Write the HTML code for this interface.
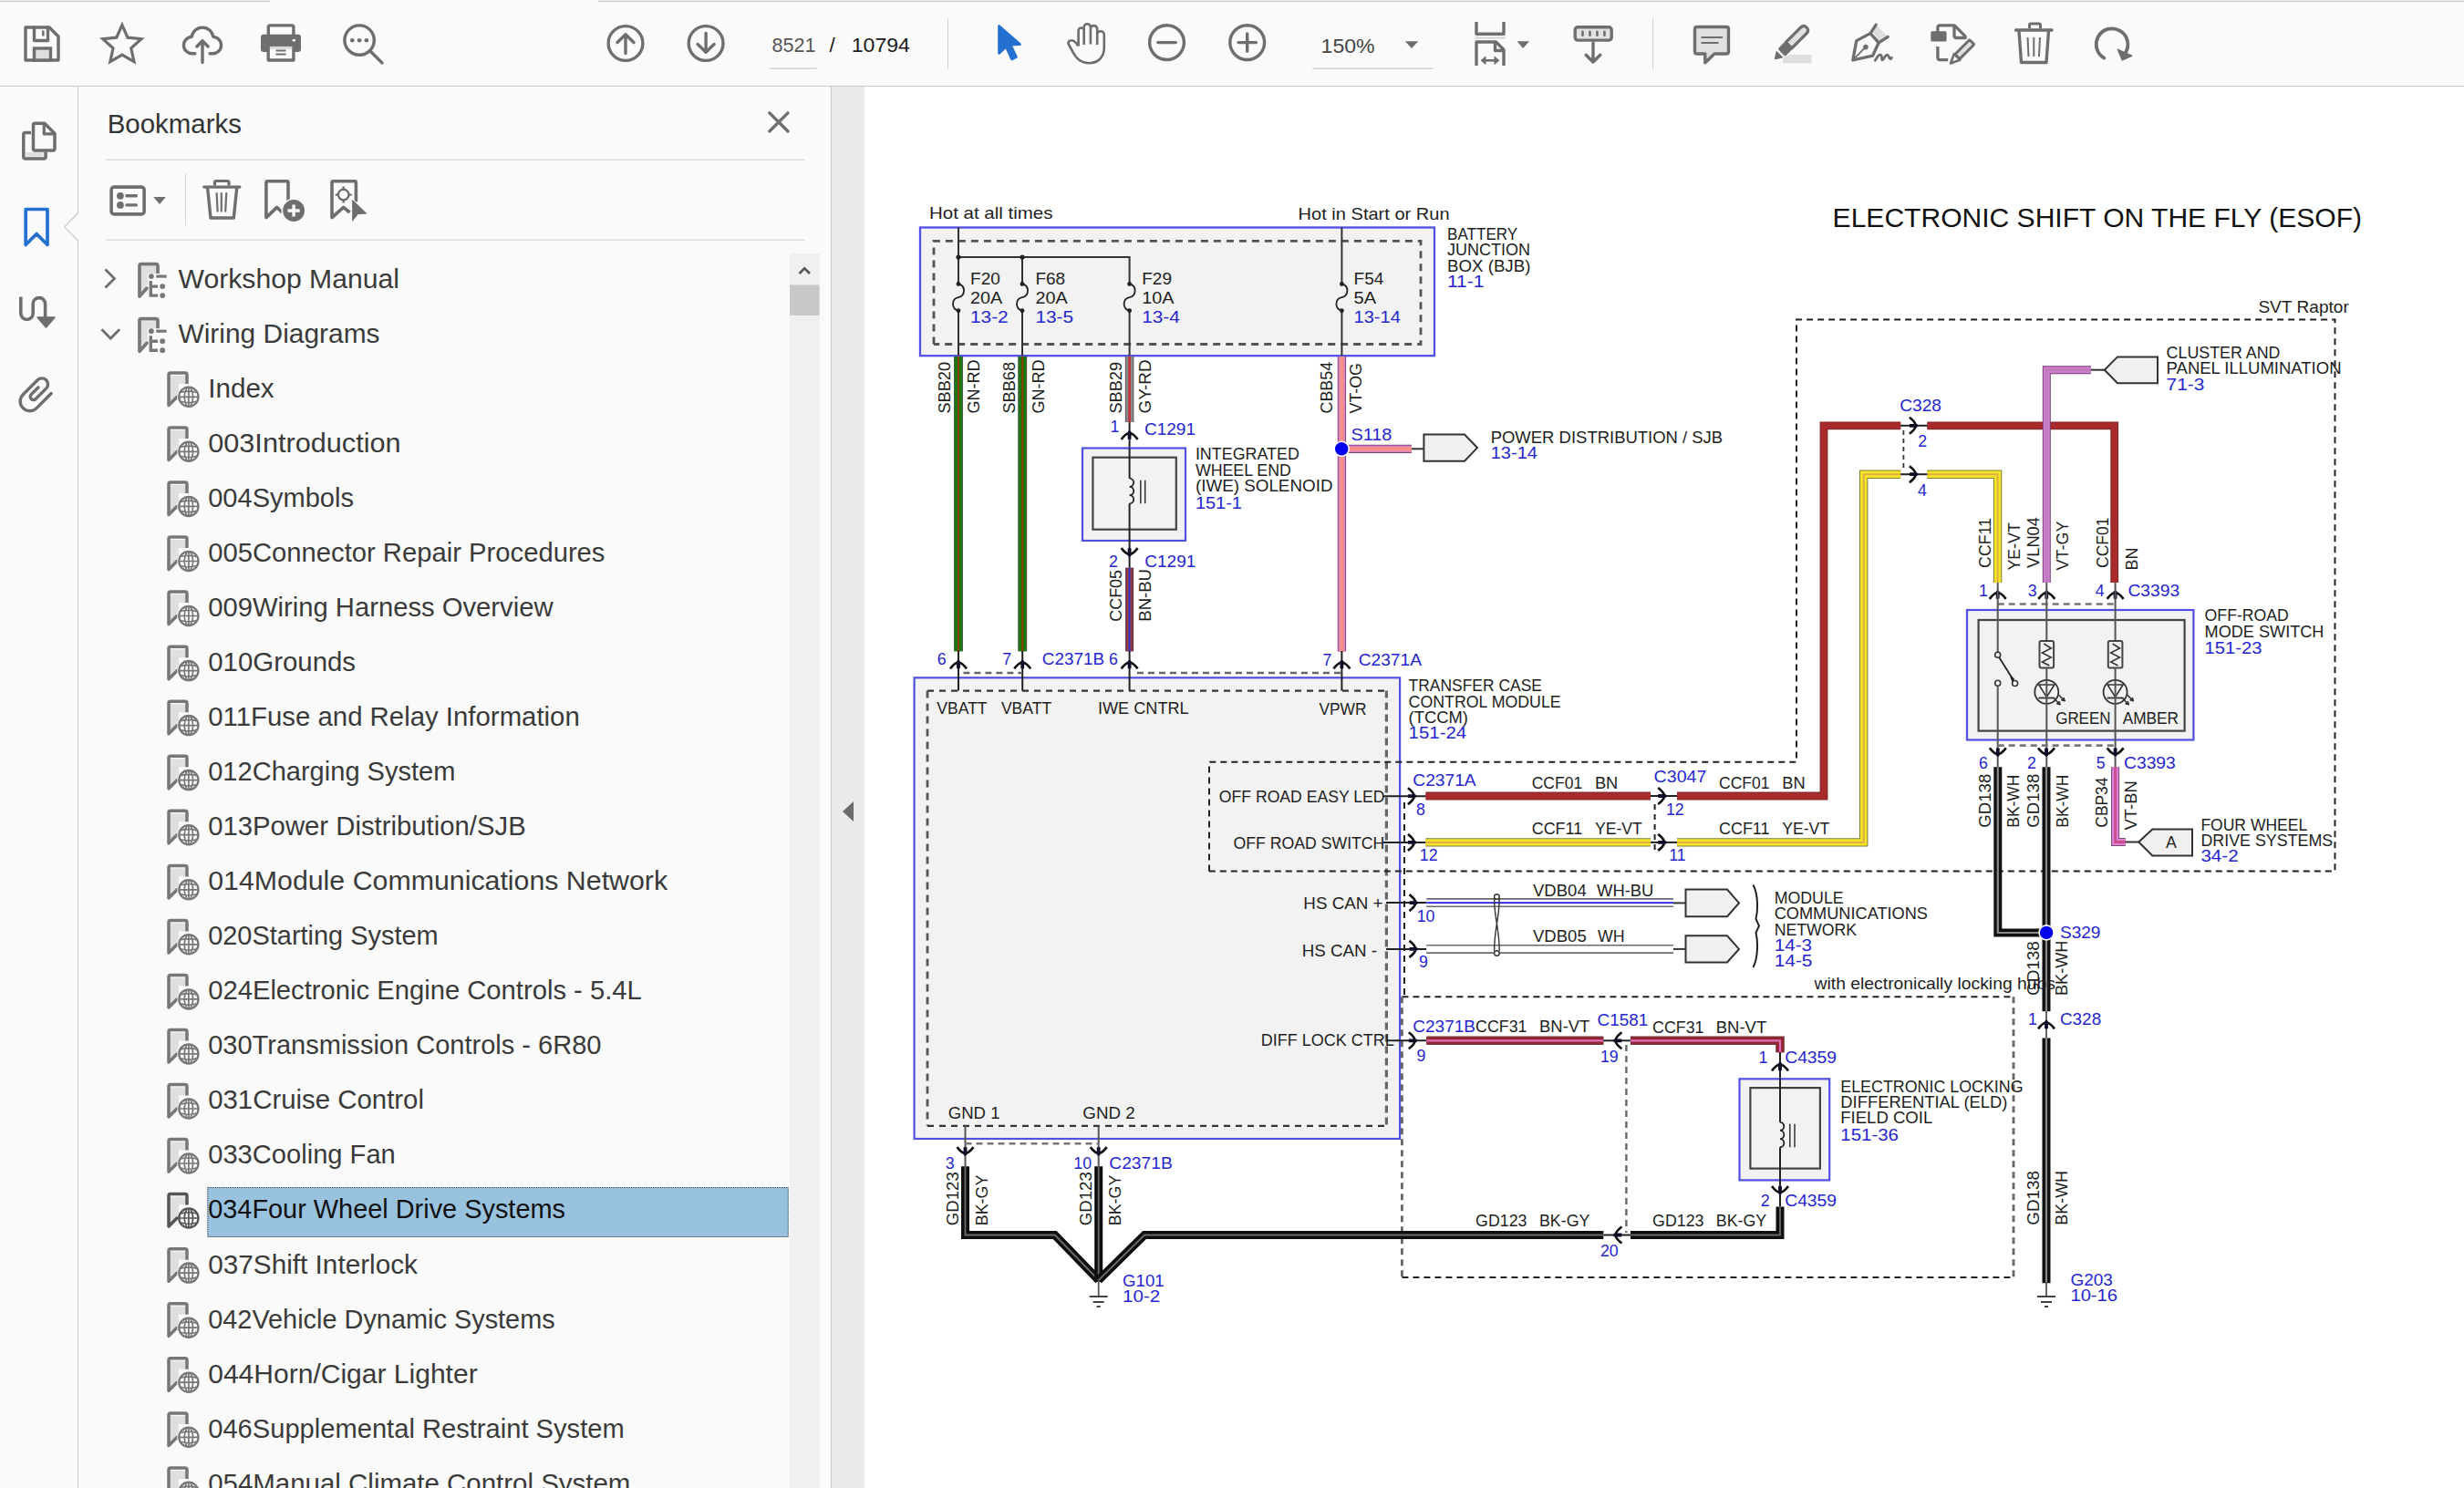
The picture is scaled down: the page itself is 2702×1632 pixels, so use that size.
<!DOCTYPE html><html><head><meta charset="utf-8"><style>html,body{margin:0;padding:0;width:2702px;height:1632px;overflow:hidden;background:#fff}svg{display:block}text{font-family:"Liberation Sans",sans-serif}</style></head><body>
<svg width="2702" height="1632" viewBox="0 0 2702 1632" font-family="Liberation Sans, sans-serif">
<rect x="0.0" y="0.0" width="2702.0" height="95.0" fill="#fafafa" stroke="none" stroke-width="1"/>
<rect x="0.0" y="95.0" width="912.0" height="1537.0" fill="#fafafa" stroke="none" stroke-width="1"/>
<rect x="912.0" y="95.0" width="36.0" height="1537.0" fill="#eaeaea" stroke="none" stroke-width="1"/>
<rect x="948.0" y="95.0" width="1754.0" height="1537.0" fill="#ffffff" stroke="none" stroke-width="1"/>
<rect x="0.0" y="0.0" width="296.0" height="1.0" fill="#ececec" stroke="none" stroke-width="1"/>
<rect x="0.0" y="1.0" width="296.0" height="1.0" fill="#c9c9c9" stroke="none" stroke-width="1"/>
<rect x="656.0" y="0.0" width="2046.0" height="1.0" fill="#ececec" stroke="none" stroke-width="1"/>
<rect x="656.0" y="1.0" width="2046.0" height="1.0" fill="#c9c9c9" stroke="none" stroke-width="1"/>
<rect x="0.0" y="94.0" width="2702.0" height="1.0" fill="#c8c8c8" stroke="none" stroke-width="1"/>
<rect x="85.0" y="95.0" width="1.0" height="1537.0" fill="#c8c8c8" stroke="none" stroke-width="1"/>
<rect x="911.0" y="95.0" width="1.0" height="1537.0" fill="#c8c8c8" stroke="none" stroke-width="1"/>
<path d="M28,30 H54 L64,40 V66 H28 Z" stroke="#6e6e6e" stroke-width="3.4" fill="none" stroke-linejoin="round" stroke-linecap="round"/>
<path d="M37.5,30 V44.5 H52.5 V30" stroke="#6e6e6e" stroke-width="3.4" fill="none" stroke-linejoin="round" stroke-linecap="round"/>
<rect x="37.5" y="53" width="18" height="13" fill="#dedede" stroke="#6e6e6e" stroke-width="3.4"/>
<rect x="46" y="33.5" width="2.6" height="6" fill="#6e6e6e"/>
<polygon points="133.90,27.40 140.01,41.19 155.01,42.74 143.79,52.81 146.95,67.56 133.90,60.00 120.85,67.56 124.01,52.81 112.79,42.74 127.79,41.19" fill="none" stroke="#6e6e6e" stroke-width="3.2" stroke-linejoin="miter" stroke-miterlimit="10"/>
<path d="M213.8,58.8 H211 A9.2,9.2 0 0 1 210.3,40.4 A11.8,11.8 0 0 1 233.7,40.4 A9.2,9.2 0 0 1 233,58.8 H230.2" stroke="#6e6e6e" stroke-width="3.4" fill="none" stroke-linejoin="round" stroke-linecap="round"/>
<path d="M222,68.5 V44.8 M215.9,51 L222,44.8 L228.1,51" stroke="#6e6e6e" stroke-width="3.4" fill="none" stroke-linejoin="round" stroke-linecap="round"/>
<path d="M294.3,38 V29.8 Q294.3,27.9 296.2,27.9 H320 Q321.9,27.9 321.9,29.8 V38" stroke="#6e6e6e" stroke-width="3.4" fill="none" stroke-linejoin="round" stroke-linecap="round"/>
<rect x="286" y="37.8" width="44" height="19.3" rx="3" fill="#6e6e6e"/>
<rect x="294.2" y="49.2" width="27.7" height="16.8" fill="#fafafa" stroke="#6e6e6e" stroke-width="3.4" stroke-linejoin="round"/>
<rect x="295.9" y="50.9" width="24.3" height="2.8" fill="#d8d8d8"/>
<path d="M302.5,55.4 H313.5 M302.5,59.4 H313.5" stroke="#6e6e6e" stroke-width="2"/>
<rect x="320.5" y="43" width="3.6" height="2.4" rx="1" fill="#fafafa"/>
<circle cx="394.1" cy="44.1" r="16.2" stroke="#6e6e6e" stroke-width="3.4" fill="none" stroke-linejoin="round" stroke-linecap="round"/>
<path d="M406,56 L419,69" stroke="#6e6e6e" stroke-width="3.4" fill="none" stroke-linejoin="round" stroke-linecap="round" stroke-width="3.8"/>
<circle cx="386.3" cy="44.3" r="2.3" fill="#6e6e6e"/>
<circle cx="394.1" cy="44.3" r="2.3" fill="#6e6e6e"/>
<circle cx="401.9" cy="44.3" r="2.3" fill="#6e6e6e"/>
<circle cx="686" cy="47.5" r="18.9" stroke="#6e6e6e" stroke-width="3.4" fill="none" stroke-linejoin="round" stroke-linecap="round"/>
<path d="M686,58.5 V38.5 M677,46.5 L686,37.8 L695,46.5" stroke="#6e6e6e" stroke-width="3.4" fill="none" stroke-linejoin="round" stroke-linecap="round" stroke-width="3.6"/>
<circle cx="774.1" cy="47.5" r="18.9" stroke="#6e6e6e" stroke-width="3.4" fill="none" stroke-linejoin="round" stroke-linecap="round"/>
<path d="M774.1,36.5 V56.5 M765.1,48.5 L774.1,57.2 L783.1,48.5" stroke="#6e6e6e" stroke-width="3.4" fill="none" stroke-linejoin="round" stroke-linecap="round" stroke-width="3.6"/>
<text x="846.5" y="57.4" font-size="22.4" fill="#555555" textLength="48.0" lengthAdjust="spacingAndGlyphs">8521</text>
<rect x="844.5" y="74.5" width="51.0" height="1.2" fill="#c8c8c8" stroke="none" stroke-width="1"/>
<text x="909.5" y="57.4" font-size="22.4" fill="#1a1a1a">/</text>
<text x="933.8" y="57.4" font-size="22.4" fill="#1a1a1a" textLength="64.0" lengthAdjust="spacingAndGlyphs">10794</text>
<rect x="1039.0" y="20.0" width="1.0" height="56.0" fill="#d2d2d2" stroke="none" stroke-width="1"/>
<path d="M1095.5,28.5 L1095.5,58.5 L1103.3,51.3 L1109.5,65 L1114.5,62.6 L1108.4,49.3 L1118.5,48.6 Z" fill="#2470d0" stroke="#2470d0" stroke-width="2.6" stroke-linejoin="round"/>
<path d="M1182.6,50.5 V33.5 A3.05,3.05 0 0 1 1188.7,33.5 V49 M1188.7,33.5 V29.8 A3.6,3.6 0 0 1 1195.9,29.8 V48.6 M1195.9,32.5 V31.8 A3.65,3.65 0 0 1 1203.2,31.8 V49 M1203.2,38.5 V38 A3.8,3.8 0 0 1 1210.8,38 V52 C1210.8,63 1204,69.2 1194,69.2 C1186,69.2 1180,64 1176.5,57 L1171.8,48.5 C1170.8,46 1172.5,44.2 1175,44.2 C1177,44.2 1178.5,45.5 1179.8,47 L1182.6,50.5" fill="none" stroke="#6e6e6e" stroke-width="2.6" stroke-linejoin="round"/>
<circle cx="1279.5" cy="46.6" r="18.9" stroke="#6e6e6e" stroke-width="3.4" fill="none" stroke-linejoin="round" stroke-linecap="round"/>
<path d="M1269.8,46.6 H1289.2" stroke="#6e6e6e" stroke-width="3.4" fill="none" stroke-linejoin="round" stroke-linecap="round" stroke-width="3.8"/>
<circle cx="1367.7" cy="46.6" r="18.9" stroke="#6e6e6e" stroke-width="3.4" fill="none" stroke-linejoin="round" stroke-linecap="round"/>
<path d="M1358,46.6 H1377.4 M1367.7,36.9 V56.3" stroke="#6e6e6e" stroke-width="3.4" fill="none" stroke-linejoin="round" stroke-linecap="round" stroke-width="3.8"/>
<text x="1448.6" y="57.7" font-size="22.4" fill="#444444" textLength="59.0" lengthAdjust="spacingAndGlyphs">150%</text>
<path d="M1540.8,45.2 H1555.3 L1548,53 Z" fill="#6e6e6e"/>
<rect x="1439.4" y="74.5" width="132.0" height="1.2" fill="#c8c8c8" stroke="none" stroke-width="1"/>
<path d="M1619,24 V37.3 H1649 V24" fill="none" stroke="#6e6e6e" stroke-width="3.4" stroke-linejoin="round"/>
<rect x="1617.0" y="40.3" width="34.0" height="2.4" fill="#d9d9d9" stroke="none" stroke-width="1"/>
<path d="M1619,72 V46 H1640.5 L1649,54.5 V72" fill="none" stroke="#6e6e6e" stroke-width="3.4" stroke-linejoin="round"/>
<path d="M1639.5,46.5 V55.5 H1648.5" stroke="#6e6e6e" stroke-width="3.4" fill="none" stroke-linejoin="round" stroke-linecap="round" stroke-width="3"/>
<path d="M1627,66.3 H1641" stroke="#6e6e6e" stroke-width="2.6"/>
<path d="M1623.5,66.3 L1629.5,61.3 V71.3 Z M1644.5,66.3 L1638.5,61.3 V71.3 Z" fill="#6e6e6e"/>
<path d="M1663.5,45.2 H1677 L1670.2,53 Z" fill="#6e6e6e"/>
<rect x="1727.2" y="29.7" width="40" height="14.4" rx="3" fill="#e2e2e2" stroke="#6e6e6e" stroke-width="3.4"/>
<rect x="1734.2" y="33.5" width="2.6" height="6.5" rx="1.3" fill="#6e6e6e"/>
<rect x="1742.2" y="33.5" width="2.6" height="6.5" rx="1.3" fill="#6e6e6e"/>
<rect x="1750.2" y="33.5" width="2.6" height="6.5" rx="1.3" fill="#6e6e6e"/>
<rect x="1758.2" y="33.5" width="2.6" height="6.5" rx="1.3" fill="#6e6e6e"/>
<path d="M1747,47 V68 M1739.2,60.2 L1747,68 L1754.8,60.2" stroke="#6e6e6e" stroke-width="3.4" fill="none" stroke-linejoin="round" stroke-linecap="round"/>
<rect x="1812.0" y="20.0" width="1.0" height="56.0" fill="#d2d2d2" stroke="none" stroke-width="1"/>
<path d="M1861,29.5 H1893 Q1895.5,29.5 1895.5,32 V56.5 Q1895.5,59 1893,59 H1880 L1869.8,68.8 V59 H1861 Q1858.5,59 1858.5,56.5 V32 Q1858.5,29.5 1861,29.5 Z" fill="#e0e0e0" stroke="#6e6e6e" stroke-width="3.4" stroke-linejoin="round"/>
<path d="M1865.5,41 H1889 M1865.5,47 H1884.5" stroke="#6e6e6e" stroke-width="1.8"/>
<rect x="1955.1" y="60.2" width="31.6" height="9.1" fill="#dedede"/>
<g transform="translate(1963,48.2) rotate(45)"><path d="M-5.8,11.5 V2 H5.8 V11.5 Q5.8,13.5 3.8,13.5 H-3.8 Q-5.8,13.5 -5.8,11.5 Z" fill="#6e6e6e" stroke="#fafafa" stroke-width="1.6" paint-order="stroke"/><path d="M-4.6,2 V-21 Q-4.6,-25.6 0,-25.6 Q4.6,-25.6 4.6,-21 V2 Z" fill="#e0e0e0" stroke="#6e6e6e" stroke-width="3.3" stroke-linejoin="round"/><path d="M-4.5,15.8 H4.5 Q5.5,15.8 4.8,17 L0.9,23.2 Q0,24.4 -0.9,23.2 L-4.8,17 Q-5.5,15.8 -4.5,15.8 Z" fill="#6e6e6e" stroke="#fafafa" stroke-width="1.6" paint-order="stroke"/></g>
<path d="M2053.5,35 L2058,28 L2069.5,39.5 L2061,45.5 Z" fill="#dedede"/>
<path d="M2031.8,66 L2035.8,44.6 L2051,36.6 L2060.2,46.8 L2053.5,61.2 Z" fill="none" stroke="#6e6e6e" stroke-width="3.3" stroke-linejoin="round"/>
<path d="M2051,36.6 L2057.2,27.2 M2060.2,46.8 L2070.3,40.4" fill="none" stroke="#6e6e6e" stroke-width="3.3" stroke-linecap="round"/>
<path d="M2033,64.6 L2045.6,51.8" stroke="#6e6e6e" stroke-width="1.8"/><circle cx="2045.9" cy="51.6" r="2.8" fill="#6e6e6e"/>
<path d="M2056.3,66.3 C2058.5,62.5 2061,58.6 2063,60.8 C2064.4,63 2062.4,67.6 2065.2,65 C2067.5,61 2069.5,58.6 2071,61.6 C2072,64.2 2073.2,66 2074.4,63.3" fill="none" stroke="#6e6e6e" stroke-width="2.8" stroke-linecap="round" stroke-linejoin="round"/>
<path d="M2124.9,36 V30.4 Q2124.9,27.9 2127.4,27.9 H2143.2 L2155,39.7 V43" fill="none" stroke="#6e6e6e" stroke-width="3.3" stroke-linejoin="round"/>
<path d="M2143,28.5 V39 Q2143,41.5 2145.5,41.5 H2155" fill="none" stroke="#6e6e6e" stroke-width="3.3" stroke-linejoin="round"/>
<rect x="2117.3" y="34.3" width="17.3" height="11.3" rx="1.5" fill="#6e6e6e"/>
<path d="M2124.9,51 V63 Q2124.9,65.6 2127.4,65.6 H2136.2" fill="none" stroke="#6e6e6e" stroke-width="3.3" stroke-linejoin="round"/>
<g transform="translate(2151,57.5) rotate(45)"><rect x="-3.6" y="-16" width="7.2" height="22.5" rx="1.5" fill="#e0e0e0" stroke="#6e6e6e" stroke-width="3"/><path d="M-4.6,7 L0,17 L4.6,7 Z" fill="#fafafa" stroke="#6e6e6e" stroke-width="2.6" stroke-linejoin="round"/></g>
<path d="M2225.5,31 V27.5 Q2225.5,26 2227,26 H2236 Q2237.5,26 2237.5,27.5 V31" fill="none" stroke="#6e6e6e" stroke-width="3"/>
<path d="M2210.5,33 H2250" stroke="#6e6e6e" stroke-width="3.4" stroke-linecap="round"/>
<path d="M2214,34 L2216.5,68.5 H2244 L2246.5,34" fill="none" stroke="#6e6e6e" stroke-width="3.4" stroke-linejoin="round"/>
<path d="M2223.5,41 L2224.5,62 M2230.3,41 V62 M2237,41 L2236,62" stroke="#6e6e6e" stroke-width="2"/>
<path d="M2307.4,63.6 A17.3,17.3 0 1 1 2331.2,57" fill="none" stroke="#6e6e6e" stroke-width="3.8" stroke-linecap="round"/>
<path d="M2322.5,54.5 L2337.6,61.2 L2327.3,65.8 Z" fill="#6e6e6e" stroke="#6e6e6e" stroke-width="1.6" stroke-linejoin="round"/>
<path d="M36.5,137.2 Q36.5,135.3 38.4,135.3 H48.8 L60,146.5 V163.1 Q60,165 58.1,165 H38.4 Q36.5,165 36.5,163.1 Z" fill="none" stroke="#6e6e6e" stroke-width="3.5" stroke-linejoin="round"/>
<path d="M48.3,135.8 V146.9 H59.5" fill="none" stroke="#6e6e6e" stroke-width="3.2" stroke-linejoin="round"/>
<path d="M34,145.6 H27.7 Q25.8,145.6 25.8,147.5 V172.1 Q25.8,174 27.7,174 H48.2 Q50.1,174 50.1,172.1 V166.6" fill="none" stroke="#6e6e6e" stroke-width="3.5" stroke-linejoin="round"/>
<rect x="28.5" y="167" width="19" height="4.6" fill="#dedede"/>
<path d="M28.2,229.5 H52 V268.5 L40.1,256.5 L28.2,268.5 Z" fill="none" stroke="#2470d0" stroke-width="3.7" stroke-linejoin="round"/>
<path d="M86,233.5 L70.8,248.8 L86,264.2 Z" fill="#fafafa"/>
<path d="M85.5,233.5 L70.8,248.8 L85.5,264.2" fill="none" stroke="#c8c8c8" stroke-width="1.2"/>
<path d="M22.8,325.5 V343.8 A6.7,6.7 0 0 0 36.2,343.8 V333.3 A6.7,6.7 0 0 1 49.6,333.3 V348" fill="none" stroke="#6e6e6e" stroke-width="3.6" stroke-linecap="butt"/>
<path d="M41.2,348.2 H59.8 L50.5,358.8 Z" fill="#6e6e6e" stroke="#6e6e6e" stroke-width="1.8" stroke-linejoin="round"/>
<path transform="translate(32.7,440.2) rotate(45)" d="M10.5,-22.7 V0 A10.5,10.5 0 0 1 -10.5,0 V-22.6 A6.6,6.6 0 0 1 2.7,-22.6 V-6.5 A3.5,3.5 0 0 1 -4.3,-6.5 V-17.3" fill="none" stroke="#6e6e6e" stroke-width="3.4" stroke-linecap="round" stroke-linejoin="round"/>
<text x="117.7" y="146.3" font-size="29" fill="#333333" textLength="147.3" lengthAdjust="spacingAndGlyphs">Bookmarks</text>
<path d="M843.8,123.8 L864,144 M864,123.8 L843.8,144" stroke="#6e6e6e" stroke-width="3.3" stroke-linecap="round"/>
<rect x="115.7" y="174.6" width="767.0" height="1.2" fill="#d6d6d6" stroke="none" stroke-width="1"/>
<rect x="115.7" y="262.5" width="767.0" height="1.2" fill="#d6d6d6" stroke="none" stroke-width="1"/>
<rect x="122.1" y="205.1" width="36" height="29.8" rx="3" fill="none" stroke="#6e6e6e" stroke-width="3.6"/>
<circle cx="131.9" cy="214.8" r="3.9" fill="#6e6e6e"/><circle cx="131.9" cy="224.9" r="3.9" fill="#6e6e6e"/>
<path d="M139,214.8 H149.4 M139,224.9 H149.4" stroke="#6e6e6e" stroke-width="3.4" stroke-linecap="round"/>
<path d="M168.2,216 H181.8 L175,224 Z" fill="#6e6e6e"/>
<rect x="203.0" y="190.5" width="1.0" height="56.6" fill="#d6d6d6" stroke="none" stroke-width="1"/>
<path d="M235.5,203.5 V200.2 Q235.5,198.5 237.2,198.5 H249.3 Q251,198.5 251,200.2 V203.5" fill="none" stroke="#6e6e6e" stroke-width="3.2"/>
<path d="M223.8,205.1 H262.8" stroke="#6e6e6e" stroke-width="3.4" stroke-linecap="round"/>
<path d="M227.6,206 L231,239 H256.3 L259.7,206" fill="none" stroke="#6e6e6e" stroke-width="3.4" stroke-linejoin="round"/>
<path d="M237.6,212 L238.6,231.6 M242.8,212 V231.6 M248.2,212 L247.2,231.6" stroke="#6e6e6e" stroke-width="2.2" stroke-linecap="round"/>
<path d="M316,220 V200.4 Q316,198.8 314.4,198.8 H293.5 Q291.9,198.8 291.9,200.4 V238.6 L303.6,227.4 L309.5,233" fill="none" stroke="#6e6e6e" stroke-width="3.6" stroke-linejoin="round"/>
<circle cx="322.1" cy="231" r="13.6" fill="#fafafa"/>
<circle cx="322.1" cy="231" r="11.9" fill="#6e6e6e"/>
<path d="M322.1,224.4 V237.6 M315.5,231 H328.7" stroke="#fafafa" stroke-width="3.4"/>
<path d="M390.4,221.5 V200.4 Q390.4,198.8 388.8,198.8 H365.6 Q364,198.8 364,200.4 V238.6 L376.7,227.4 L383.5,233" fill="none" stroke="#6e6e6e" stroke-width="3.6" stroke-linejoin="round"/>
<circle cx="376.7" cy="213.6" r="5.8" fill="none" stroke="#6e6e6e" stroke-width="2.4"/>
<path d="M376.7,204.6 V207.8 M376.7,219.4 V222.6 M367.7,213.6 H370.9 M382.5,213.6 H385.7" stroke="#6e6e6e" stroke-width="2.4"/>
<path d="M386.4,219.1 L402.2,234.3 L392.5,234.9 L386.4,242.8 Z" fill="#6e6e6e" stroke="#fafafa" stroke-width="2.4" stroke-linejoin="round" paint-order="stroke"/>
<path d="M386.4,219.1 L402.2,234.3 L392.5,234.9 L386.4,242.8 Z" fill="#6e6e6e"/>
<rect x="866.0" y="278.0" width="33.0" height="1354.0" fill="#f0f0f0" stroke="none" stroke-width="1"/>
<rect x="866.0" y="312.5" width="32.5" height="33.5" fill="#c8c8c8" stroke="none" stroke-width="1"/>
<path d="M876.5,300 L882.2,294.3 L888,300" fill="none" stroke="#555" stroke-width="2.6"/>
<path d="M936,879 V901 L924,890 Z" fill="#6b6b6b"/>
<path d="M115.5,295.6 L125.5,305.6 L115.5,315.6" fill="none" stroke="#6e6e6e" stroke-width="2.8"/>
<path d="M153,324.6 V291.6 Q153,289.6 155,289.6 H171 Q173,289.6 173,291.6 V300.1" fill="none" stroke="#777" stroke-width="3.7" stroke-linejoin="round"/>
<path d="M155,292.1 H171 V300.1 H162 V312.1 L155,319.1 Z" fill="#dfdfdf"/>
<path d="M153,325.1 L161,316.1" stroke="#777" stroke-width="3.7" stroke-linecap="round"/>
<circle cx="165.9" cy="303.1" r="2.9" fill="#777"/><path d="M171.3,303.1 H182.7" stroke="#777" stroke-width="3.2"/>
<path d="M165.3,308.1 V324.1 H173 M165.3,314.1 H173" fill="none" stroke="#777" stroke-width="3.4"/>
<circle cx="178.2" cy="314.1" r="2.9" fill="#777"/><circle cx="178.2" cy="324.1" r="2.9" fill="#777"/>
<text x="195.5" y="315.6" font-size="28.6" fill="#3a3a3a" textLength="242.5" lengthAdjust="spacingAndGlyphs">Workshop Manual</text>
<path d="M111.5,361.2 L121.3,371.2 L131.1,361.2" fill="none" stroke="#6e6e6e" stroke-width="2.8"/>
<path d="M153,384.7 V351.7 Q153,349.7 155,349.7 H171 Q173,349.7 173,351.7 V360.2" fill="none" stroke="#777" stroke-width="3.7" stroke-linejoin="round"/>
<path d="M155,352.2 H171 V360.2 H162 V372.2 L155,379.2 Z" fill="#dfdfdf"/>
<path d="M153,385.2 L161,376.2" stroke="#777" stroke-width="3.7" stroke-linecap="round"/>
<circle cx="165.9" cy="363.2" r="2.9" fill="#777"/><path d="M171.3,363.2 H182.7" stroke="#777" stroke-width="3.2"/>
<path d="M165.3,368.2 V384.2 H173 M165.3,374.2 H173" fill="none" stroke="#777" stroke-width="3.4"/>
<circle cx="178.2" cy="374.2" r="2.9" fill="#777"/><circle cx="178.2" cy="384.2" r="2.9" fill="#777"/>
<text x="195.5" y="375.7" font-size="28.6" fill="#3a3a3a" textLength="221.0" lengthAdjust="spacingAndGlyphs">Wiring Diagrams</text>
<path d="M185,411.9 H204.5 V420.9 H196 V432.9 L185,441.9 Z" fill="#dfdfdf"/>
<path d="M185,443.9 V410.9 Q185,408.9 187,408.9 H203 Q205,408.9 205,410.9 V420.9" fill="none" stroke="#777" stroke-width="3.5" stroke-linejoin="round"/>
<path d="M185,444.4 L194,435.4" stroke="#777" stroke-width="3.5" stroke-linecap="round"/>
<circle cx="206.9" cy="435.3" r="12.6" fill="#fafafa"/>
<circle cx="206.9" cy="435.3" r="10.6" fill="#fafafa" stroke="#777" stroke-width="2.3"/>
<path d="M196.9,435.3 H216.9 M198.3,430.3 Q206.9,427.8 215.5,430.3 M198.3,440.3 Q206.9,442.8 215.5,440.3 M206.9,425.3 V445.3 M204.9,425.3 Q199.4,435.3 204.9,445.3 M208.9,425.3 Q214.4,435.3 208.9,445.3" fill="none" stroke="#777" stroke-width="1.7"/>
<text x="228.2" y="435.7" font-size="28.6" fill="#3a3a3a" textLength="72.5" lengthAdjust="spacingAndGlyphs">Index</text>
<path d="M185,471.9 H204.5 V480.9 H196 V492.9 L185,501.9 Z" fill="#dfdfdf"/>
<path d="M185,503.9 V470.9 Q185,468.9 187,468.9 H203 Q205,468.9 205,470.9 V480.9" fill="none" stroke="#777" stroke-width="3.5" stroke-linejoin="round"/>
<path d="M185,504.4 L194,495.4" stroke="#777" stroke-width="3.5" stroke-linecap="round"/>
<circle cx="206.9" cy="495.3" r="12.6" fill="#fafafa"/>
<circle cx="206.9" cy="495.3" r="10.6" fill="#fafafa" stroke="#777" stroke-width="2.3"/>
<path d="M196.9,495.3 H216.9 M198.3,490.3 Q206.9,487.8 215.5,490.3 M198.3,500.3 Q206.9,502.8 215.5,500.3 M206.9,485.3 V505.3 M204.9,485.3 Q199.4,495.3 204.9,505.3 M208.9,485.3 Q214.4,495.3 208.9,505.3" fill="none" stroke="#777" stroke-width="1.7"/>
<text x="228.2" y="495.8" font-size="28.6" fill="#3a3a3a" textLength="211.5" lengthAdjust="spacingAndGlyphs">003Introduction</text>
<path d="M185,532.0 H204.5 V541.0 H196 V553.0 L185,562.0 Z" fill="#dfdfdf"/>
<path d="M185,564.0 V531.0 Q185,529.0 187,529.0 H203 Q205,529.0 205,531.0 V541.0" fill="none" stroke="#777" stroke-width="3.5" stroke-linejoin="round"/>
<path d="M185,564.5 L194,555.5" stroke="#777" stroke-width="3.5" stroke-linecap="round"/>
<circle cx="206.9" cy="555.4" r="12.6" fill="#fafafa"/>
<circle cx="206.9" cy="555.4" r="10.6" fill="#fafafa" stroke="#777" stroke-width="2.3"/>
<path d="M196.9,555.4 H216.9 M198.3,550.4 Q206.9,547.9 215.5,550.4 M198.3,560.4 Q206.9,562.9 215.5,560.4 M206.9,545.4 V565.4 M204.9,545.4 Q199.4,555.4 204.9,565.4 M208.9,545.4 Q214.4,555.4 208.9,565.4" fill="none" stroke="#777" stroke-width="1.7"/>
<text x="228.2" y="555.8" font-size="28.6" fill="#3a3a3a" textLength="159.8" lengthAdjust="spacingAndGlyphs">004Symbols</text>
<path d="M185,592.1 H204.5 V601.1 H196 V613.1 L185,622.1 Z" fill="#dfdfdf"/>
<path d="M185,624.1 V591.1 Q185,589.1 187,589.1 H203 Q205,589.1 205,591.1 V601.1" fill="none" stroke="#777" stroke-width="3.5" stroke-linejoin="round"/>
<path d="M185,624.6 L194,615.6" stroke="#777" stroke-width="3.5" stroke-linecap="round"/>
<circle cx="206.9" cy="615.5" r="12.6" fill="#fafafa"/>
<circle cx="206.9" cy="615.5" r="10.6" fill="#fafafa" stroke="#777" stroke-width="2.3"/>
<path d="M196.9,615.5 H216.9 M198.3,610.5 Q206.9,608.0 215.5,610.5 M198.3,620.5 Q206.9,623.0 215.5,620.5 M206.9,605.5 V625.5 M204.9,605.5 Q199.4,615.5 204.9,625.5 M208.9,605.5 Q214.4,615.5 208.9,625.5" fill="none" stroke="#777" stroke-width="1.7"/>
<text x="228.2" y="615.9" font-size="28.6" fill="#3a3a3a" textLength="435.3" lengthAdjust="spacingAndGlyphs">005Connector Repair Procedures</text>
<path d="M185,652.1 H204.5 V661.1 H196 V673.1 L185,682.1 Z" fill="#dfdfdf"/>
<path d="M185,684.1 V651.1 Q185,649.1 187,649.1 H203 Q205,649.1 205,651.1 V661.1" fill="none" stroke="#777" stroke-width="3.5" stroke-linejoin="round"/>
<path d="M185,684.6 L194,675.6" stroke="#777" stroke-width="3.5" stroke-linecap="round"/>
<circle cx="206.9" cy="675.5" r="12.6" fill="#fafafa"/>
<circle cx="206.9" cy="675.5" r="10.6" fill="#fafafa" stroke="#777" stroke-width="2.3"/>
<path d="M196.9,675.5 H216.9 M198.3,670.5 Q206.9,668.0 215.5,670.5 M198.3,680.5 Q206.9,683.0 215.5,680.5 M206.9,665.5 V685.5 M204.9,665.5 Q199.4,675.5 204.9,685.5 M208.9,665.5 Q214.4,675.5 208.9,685.5" fill="none" stroke="#777" stroke-width="1.7"/>
<text x="228.2" y="675.9" font-size="28.6" fill="#3a3a3a" textLength="378.3" lengthAdjust="spacingAndGlyphs">009Wiring Harness Overview</text>
<path d="M185,712.2 H204.5 V721.2 H196 V733.2 L185,742.2 Z" fill="#dfdfdf"/>
<path d="M185,744.2 V711.2 Q185,709.2 187,709.2 H203 Q205,709.2 205,711.2 V721.2" fill="none" stroke="#777" stroke-width="3.5" stroke-linejoin="round"/>
<path d="M185,744.7 L194,735.7" stroke="#777" stroke-width="3.5" stroke-linecap="round"/>
<circle cx="206.9" cy="735.6" r="12.6" fill="#fafafa"/>
<circle cx="206.9" cy="735.6" r="10.6" fill="#fafafa" stroke="#777" stroke-width="2.3"/>
<path d="M196.9,735.6 H216.9 M198.3,730.6 Q206.9,728.1 215.5,730.6 M198.3,740.6 Q206.9,743.1 215.5,740.6 M206.9,725.6 V745.6 M204.9,725.6 Q199.4,735.6 204.9,745.6 M208.9,725.6 Q214.4,735.6 208.9,745.6" fill="none" stroke="#777" stroke-width="1.7"/>
<text x="228.2" y="736.0" font-size="28.6" fill="#3a3a3a" textLength="161.9" lengthAdjust="spacingAndGlyphs">010Grounds</text>
<path d="M185,772.2 H204.5 V781.2 H196 V793.2 L185,802.2 Z" fill="#dfdfdf"/>
<path d="M185,804.2 V771.2 Q185,769.2 187,769.2 H203 Q205,769.2 205,771.2 V781.2" fill="none" stroke="#777" stroke-width="3.5" stroke-linejoin="round"/>
<path d="M185,804.7 L194,795.7" stroke="#777" stroke-width="3.5" stroke-linecap="round"/>
<circle cx="206.9" cy="795.6" r="12.6" fill="#fafafa"/>
<circle cx="206.9" cy="795.6" r="10.6" fill="#fafafa" stroke="#777" stroke-width="2.3"/>
<path d="M196.9,795.6 H216.9 M198.3,790.6 Q206.9,788.1 215.5,790.6 M198.3,800.6 Q206.9,803.1 215.5,800.6 M206.9,785.6 V805.6 M204.9,785.6 Q199.4,795.6 204.9,805.6 M208.9,785.6 Q214.4,795.6 208.9,805.6" fill="none" stroke="#777" stroke-width="1.7"/>
<text x="228.2" y="796.0" font-size="28.6" fill="#3a3a3a" textLength="407.6" lengthAdjust="spacingAndGlyphs">011Fuse and Relay Information</text>
<path d="M185,832.2 H204.5 V841.2 H196 V853.2 L185,862.2 Z" fill="#dfdfdf"/>
<path d="M185,864.2 V831.2 Q185,829.2 187,829.2 H203 Q205,829.2 205,831.2 V841.2" fill="none" stroke="#777" stroke-width="3.5" stroke-linejoin="round"/>
<path d="M185,864.8 L194,855.8" stroke="#777" stroke-width="3.5" stroke-linecap="round"/>
<circle cx="206.9" cy="855.6" r="12.6" fill="#fafafa"/>
<circle cx="206.9" cy="855.6" r="10.6" fill="#fafafa" stroke="#777" stroke-width="2.3"/>
<path d="M196.9,855.6 H216.9 M198.3,850.6 Q206.9,848.1 215.5,850.6 M198.3,860.6 Q206.9,863.1 215.5,860.6 M206.9,845.6 V865.6 M204.9,845.6 Q199.4,855.6 204.9,865.6 M208.9,845.6 Q214.4,855.6 208.9,865.6" fill="none" stroke="#777" stroke-width="1.7"/>
<text x="228.2" y="856.0" font-size="28.6" fill="#3a3a3a" textLength="271.3" lengthAdjust="spacingAndGlyphs">012Charging System</text>
<path d="M185,892.3 H204.5 V901.3 H196 V913.3 L185,922.3 Z" fill="#dfdfdf"/>
<path d="M185,924.3 V891.3 Q185,889.3 187,889.3 H203 Q205,889.3 205,891.3 V901.3" fill="none" stroke="#777" stroke-width="3.5" stroke-linejoin="round"/>
<path d="M185,924.8 L194,915.8" stroke="#777" stroke-width="3.5" stroke-linecap="round"/>
<circle cx="206.9" cy="915.7" r="12.6" fill="#fafafa"/>
<circle cx="206.9" cy="915.7" r="10.6" fill="#fafafa" stroke="#777" stroke-width="2.3"/>
<path d="M196.9,915.7 H216.9 M198.3,910.7 Q206.9,908.2 215.5,910.7 M198.3,920.7 Q206.9,923.2 215.5,920.7 M206.9,905.7 V925.7 M204.9,905.7 Q199.4,915.7 204.9,925.7 M208.9,905.7 Q214.4,915.7 208.9,925.7" fill="none" stroke="#777" stroke-width="1.7"/>
<text x="228.2" y="916.1" font-size="28.6" fill="#3a3a3a" textLength="348.5" lengthAdjust="spacingAndGlyphs">013Power Distribution/SJB</text>
<path d="M185,952.4 H204.5 V961.4 H196 V973.4 L185,982.4 Z" fill="#dfdfdf"/>
<path d="M185,984.4 V951.4 Q185,949.4 187,949.4 H203 Q205,949.4 205,951.4 V961.4" fill="none" stroke="#777" stroke-width="3.5" stroke-linejoin="round"/>
<path d="M185,984.9 L194,975.9" stroke="#777" stroke-width="3.5" stroke-linecap="round"/>
<circle cx="206.9" cy="975.8" r="12.6" fill="#fafafa"/>
<circle cx="206.9" cy="975.8" r="10.6" fill="#fafafa" stroke="#777" stroke-width="2.3"/>
<path d="M196.9,975.8 H216.9 M198.3,970.8 Q206.9,968.2 215.5,970.8 M198.3,980.8 Q206.9,983.2 215.5,980.8 M206.9,965.8 V985.8 M204.9,965.8 Q199.4,975.8 204.9,985.8 M208.9,965.8 Q214.4,975.8 208.9,985.8" fill="none" stroke="#777" stroke-width="1.7"/>
<text x="228.2" y="976.1" font-size="28.6" fill="#3a3a3a" textLength="503.9" lengthAdjust="spacingAndGlyphs">014Module Communications Network</text>
<path d="M185,1012.4 H204.5 V1021.4 H196 V1033.4 L185,1042.4 Z" fill="#dfdfdf"/>
<path d="M185,1044.4 V1011.4 Q185,1009.4 187,1009.4 H203 Q205,1009.4 205,1011.4 V1021.4" fill="none" stroke="#777" stroke-width="3.5" stroke-linejoin="round"/>
<path d="M185,1044.9 L194,1035.9" stroke="#777" stroke-width="3.5" stroke-linecap="round"/>
<circle cx="206.9" cy="1035.8" r="12.6" fill="#fafafa"/>
<circle cx="206.9" cy="1035.8" r="10.6" fill="#fafafa" stroke="#777" stroke-width="2.3"/>
<path d="M196.9,1035.8 H216.9 M198.3,1030.8 Q206.9,1028.3 215.5,1030.8 M198.3,1040.8 Q206.9,1043.3 215.5,1040.8 M206.9,1025.8 V1045.8 M204.9,1025.8 Q199.4,1035.8 204.9,1045.8 M208.9,1025.8 Q214.4,1035.8 208.9,1045.8" fill="none" stroke="#777" stroke-width="1.7"/>
<text x="228.2" y="1036.2" font-size="28.6" fill="#3a3a3a" textLength="252.5" lengthAdjust="spacingAndGlyphs">020Starting System</text>
<path d="M185,1072.5 H204.5 V1081.5 H196 V1093.5 L185,1102.5 Z" fill="#dfdfdf"/>
<path d="M185,1104.5 V1071.5 Q185,1069.5 187,1069.5 H203 Q205,1069.5 205,1071.5 V1081.5" fill="none" stroke="#777" stroke-width="3.5" stroke-linejoin="round"/>
<path d="M185,1105.0 L194,1096.0" stroke="#777" stroke-width="3.5" stroke-linecap="round"/>
<circle cx="206.9" cy="1095.9" r="12.6" fill="#fafafa"/>
<circle cx="206.9" cy="1095.9" r="10.6" fill="#fafafa" stroke="#777" stroke-width="2.3"/>
<path d="M196.9,1095.9 H216.9 M198.3,1090.9 Q206.9,1088.4 215.5,1090.9 M198.3,1100.9 Q206.9,1103.4 215.5,1100.9 M206.9,1085.9 V1105.9 M204.9,1085.9 Q199.4,1095.9 204.9,1105.9 M208.9,1085.9 Q214.4,1095.9 208.9,1105.9" fill="none" stroke="#777" stroke-width="1.7"/>
<text x="228.2" y="1096.2" font-size="28.6" fill="#3a3a3a" textLength="475.6" lengthAdjust="spacingAndGlyphs">024Electronic Engine Controls - 5.4L</text>
<path d="M185,1132.5 H204.5 V1141.5 H196 V1153.5 L185,1162.5 Z" fill="#dfdfdf"/>
<path d="M185,1164.5 V1131.5 Q185,1129.5 187,1129.5 H203 Q205,1129.5 205,1131.5 V1141.5" fill="none" stroke="#777" stroke-width="3.5" stroke-linejoin="round"/>
<path d="M185,1165.0 L194,1156.0" stroke="#777" stroke-width="3.5" stroke-linecap="round"/>
<circle cx="206.9" cy="1155.9" r="12.6" fill="#fafafa"/>
<circle cx="206.9" cy="1155.9" r="10.6" fill="#fafafa" stroke="#777" stroke-width="2.3"/>
<path d="M196.9,1155.9 H216.9 M198.3,1150.9 Q206.9,1148.4 215.5,1150.9 M198.3,1160.9 Q206.9,1163.4 215.5,1160.9 M206.9,1145.9 V1165.9 M204.9,1145.9 Q199.4,1155.9 204.9,1165.9 M208.9,1145.9 Q214.4,1155.9 208.9,1165.9" fill="none" stroke="#777" stroke-width="1.7"/>
<text x="228.2" y="1156.3" font-size="28.6" fill="#3a3a3a" textLength="431.3" lengthAdjust="spacingAndGlyphs">030Transmission Controls - 6R80</text>
<path d="M185,1192.5 H204.5 V1201.5 H196 V1213.5 L185,1222.5 Z" fill="#dfdfdf"/>
<path d="M185,1224.5 V1191.5 Q185,1189.5 187,1189.5 H203 Q205,1189.5 205,1191.5 V1201.5" fill="none" stroke="#777" stroke-width="3.5" stroke-linejoin="round"/>
<path d="M185,1225.0 L194,1216.0" stroke="#777" stroke-width="3.5" stroke-linecap="round"/>
<circle cx="206.9" cy="1216.0" r="12.6" fill="#fafafa"/>
<circle cx="206.9" cy="1216.0" r="10.6" fill="#fafafa" stroke="#777" stroke-width="2.3"/>
<path d="M196.9,1216.0 H216.9 M198.3,1211.0 Q206.9,1208.5 215.5,1211.0 M198.3,1221.0 Q206.9,1223.5 215.5,1221.0 M206.9,1206.0 V1226.0 M204.9,1206.0 Q199.4,1216.0 204.9,1226.0 M208.9,1206.0 Q214.4,1216.0 208.9,1226.0" fill="none" stroke="#777" stroke-width="1.7"/>
<text x="228.2" y="1216.3" font-size="28.6" fill="#3a3a3a" textLength="236.8" lengthAdjust="spacingAndGlyphs">031Cruise Control</text>
<path d="M185,1252.6 H204.5 V1261.6 H196 V1273.6 L185,1282.6 Z" fill="#dfdfdf"/>
<path d="M185,1284.6 V1251.6 Q185,1249.6 187,1249.6 H203 Q205,1249.6 205,1251.6 V1261.6" fill="none" stroke="#777" stroke-width="3.5" stroke-linejoin="round"/>
<path d="M185,1285.1 L194,1276.1" stroke="#777" stroke-width="3.5" stroke-linecap="round"/>
<circle cx="206.9" cy="1276.0" r="12.6" fill="#fafafa"/>
<circle cx="206.9" cy="1276.0" r="10.6" fill="#fafafa" stroke="#777" stroke-width="2.3"/>
<path d="M196.9,1276.0 H216.9 M198.3,1271.0 Q206.9,1268.5 215.5,1271.0 M198.3,1281.0 Q206.9,1283.5 215.5,1281.0 M206.9,1266.0 V1286.0 M204.9,1266.0 Q199.4,1276.0 204.9,1286.0 M208.9,1266.0 Q214.4,1276.0 208.9,1286.0" fill="none" stroke="#777" stroke-width="1.7"/>
<text x="228.2" y="1276.4" font-size="28.6" fill="#3a3a3a" textLength="205.6" lengthAdjust="spacingAndGlyphs">033Cooling Fan</text>
<rect x="227.4" y="1302.0" width="637.3" height="55.0" fill="#99c2de" stroke="none" stroke-width="1"/>
<rect x="227.9" y="1302.5" width="636.3" height="54" fill="none" stroke="#3a3a3a" stroke-width="1" stroke-dasharray="1 1"/>
<path d="M185,1312.6 H204.5 V1321.6 H196 V1333.6 L185,1342.6 Z" fill="#dfdfdf"/>
<path d="M185,1344.6 V1311.6 Q185,1309.6 187,1309.6 H203 Q205,1309.6 205,1311.6 V1321.6" fill="none" stroke="#555" stroke-width="3.5" stroke-linejoin="round"/>
<path d="M185,1345.1 L194,1336.1" stroke="#555" stroke-width="3.5" stroke-linecap="round"/>
<circle cx="206.9" cy="1336.0" r="12.6" fill="#fafafa" opacity="0"/>
<circle cx="206.9" cy="1336.0" r="10.6" fill="#fafafa" stroke="#555" stroke-width="2.3"/>
<path d="M196.9,1336.0 H216.9 M198.3,1331.0 Q206.9,1328.5 215.5,1331.0 M198.3,1341.0 Q206.9,1343.5 215.5,1341.0 M206.9,1326.0 V1346.0 M204.9,1326.0 Q199.4,1336.0 204.9,1346.0 M208.9,1326.0 Q214.4,1336.0 208.9,1346.0" fill="none" stroke="#555" stroke-width="1.7"/>
<text x="228.2" y="1336.4" font-size="28.6" fill="#111111" textLength="391.8" lengthAdjust="spacingAndGlyphs">034Four Wheel Drive Systems</text>
<path d="M185,1372.7 H204.5 V1381.7 H196 V1393.7 L185,1402.7 Z" fill="#dfdfdf"/>
<path d="M185,1404.7 V1371.7 Q185,1369.7 187,1369.7 H203 Q205,1369.7 205,1371.7 V1381.7" fill="none" stroke="#777" stroke-width="3.5" stroke-linejoin="round"/>
<path d="M185,1405.2 L194,1396.2" stroke="#777" stroke-width="3.5" stroke-linecap="round"/>
<circle cx="206.9" cy="1396.1" r="12.6" fill="#fafafa"/>
<circle cx="206.9" cy="1396.1" r="10.6" fill="#fafafa" stroke="#777" stroke-width="2.3"/>
<path d="M196.9,1396.1 H216.9 M198.3,1391.1 Q206.9,1388.6 215.5,1391.1 M198.3,1401.1 Q206.9,1403.6 215.5,1401.1 M206.9,1386.1 V1406.1 M204.9,1386.1 Q199.4,1396.1 204.9,1406.1 M208.9,1386.1 Q214.4,1396.1 208.9,1406.1" fill="none" stroke="#777" stroke-width="1.7"/>
<text x="228.2" y="1396.5" font-size="28.6" fill="#3a3a3a" textLength="229.8" lengthAdjust="spacingAndGlyphs">037Shift Interlock</text>
<path d="M185,1432.8 H204.5 V1441.8 H196 V1453.8 L185,1462.8 Z" fill="#dfdfdf"/>
<path d="M185,1464.8 V1431.8 Q185,1429.8 187,1429.8 H203 Q205,1429.8 205,1431.8 V1441.8" fill="none" stroke="#777" stroke-width="3.5" stroke-linejoin="round"/>
<path d="M185,1465.3 L194,1456.3" stroke="#777" stroke-width="3.5" stroke-linecap="round"/>
<circle cx="206.9" cy="1456.2" r="12.6" fill="#fafafa"/>
<circle cx="206.9" cy="1456.2" r="10.6" fill="#fafafa" stroke="#777" stroke-width="2.3"/>
<path d="M196.9,1456.2 H216.9 M198.3,1451.2 Q206.9,1448.7 215.5,1451.2 M198.3,1461.2 Q206.9,1463.7 215.5,1461.2 M206.9,1446.2 V1466.2 M204.9,1446.2 Q199.4,1456.2 204.9,1466.2 M208.9,1446.2 Q214.4,1456.2 208.9,1466.2" fill="none" stroke="#777" stroke-width="1.7"/>
<text x="228.2" y="1456.6" font-size="28.6" fill="#3a3a3a" textLength="380.5" lengthAdjust="spacingAndGlyphs">042Vehicle Dynamic Systems</text>
<path d="M185,1492.8 H204.5 V1501.8 H196 V1513.8 L185,1522.8 Z" fill="#dfdfdf"/>
<path d="M185,1524.8 V1491.8 Q185,1489.8 187,1489.8 H203 Q205,1489.8 205,1491.8 V1501.8" fill="none" stroke="#777" stroke-width="3.5" stroke-linejoin="round"/>
<path d="M185,1525.3 L194,1516.3" stroke="#777" stroke-width="3.5" stroke-linecap="round"/>
<circle cx="206.9" cy="1516.2" r="12.6" fill="#fafafa"/>
<circle cx="206.9" cy="1516.2" r="10.6" fill="#fafafa" stroke="#777" stroke-width="2.3"/>
<path d="M196.9,1516.2 H216.9 M198.3,1511.2 Q206.9,1508.7 215.5,1511.2 M198.3,1521.2 Q206.9,1523.7 215.5,1521.2 M206.9,1506.2 V1526.2 M204.9,1506.2 Q199.4,1516.2 204.9,1526.2 M208.9,1506.2 Q214.4,1516.2 208.9,1526.2" fill="none" stroke="#777" stroke-width="1.7"/>
<text x="228.2" y="1516.6" font-size="28.6" fill="#3a3a3a" textLength="295.5" lengthAdjust="spacingAndGlyphs">044Horn/Cigar Lighter</text>
<path d="M185,1552.9 H204.5 V1561.9 H196 V1573.9 L185,1582.9 Z" fill="#dfdfdf"/>
<path d="M185,1584.9 V1551.9 Q185,1549.9 187,1549.9 H203 Q205,1549.9 205,1551.9 V1561.9" fill="none" stroke="#777" stroke-width="3.5" stroke-linejoin="round"/>
<path d="M185,1585.4 L194,1576.4" stroke="#777" stroke-width="3.5" stroke-linecap="round"/>
<circle cx="206.9" cy="1576.3" r="12.6" fill="#fafafa"/>
<circle cx="206.9" cy="1576.3" r="10.6" fill="#fafafa" stroke="#777" stroke-width="2.3"/>
<path d="M196.9,1576.3 H216.9 M198.3,1571.3 Q206.9,1568.8 215.5,1571.3 M198.3,1581.3 Q206.9,1583.8 215.5,1581.3 M206.9,1566.3 V1586.3 M204.9,1566.3 Q199.4,1576.3 204.9,1586.3 M208.9,1566.3 Q214.4,1576.3 208.9,1586.3" fill="none" stroke="#777" stroke-width="1.7"/>
<text x="228.2" y="1576.7" font-size="28.6" fill="#3a3a3a" textLength="456.5" lengthAdjust="spacingAndGlyphs">046Supplemental Restraint System</text>
<path d="M185,1612.9 H204.5 V1621.9 H196 V1633.9 L185,1642.9 Z" fill="#dfdfdf"/>
<path d="M185,1644.9 V1611.9 Q185,1609.9 187,1609.9 H203 Q205,1609.9 205,1611.9 V1621.9" fill="none" stroke="#777" stroke-width="3.5" stroke-linejoin="round"/>
<path d="M185,1645.4 L194,1636.4" stroke="#777" stroke-width="3.5" stroke-linecap="round"/>
<circle cx="206.9" cy="1636.3" r="12.6" fill="#fafafa"/>
<circle cx="206.9" cy="1636.3" r="10.6" fill="#fafafa" stroke="#777" stroke-width="2.3"/>
<path d="M196.9,1636.3 H216.9 M198.3,1631.3 Q206.9,1628.8 215.5,1631.3 M198.3,1641.3 Q206.9,1643.8 215.5,1641.3 M206.9,1626.3 V1646.3 M204.9,1626.3 Q199.4,1636.3 204.9,1646.3 M208.9,1626.3 Q214.4,1636.3 208.9,1646.3" fill="none" stroke="#777" stroke-width="1.7"/>
<text x="228.2" y="1636.7" font-size="28.6" fill="#3a3a3a" textLength="463.2" lengthAdjust="spacingAndGlyphs">054Manual Climate Control System</text>
<text x="1019.0" y="240.0" font-size="17.8" fill="#1e1e1e" textLength="135.4" lengthAdjust="spacingAndGlyphs">Hot at all times</text>
<text x="1423.6" y="241.0" font-size="17.8" fill="#1e1e1e" textLength="166.0" lengthAdjust="spacingAndGlyphs">Hot in Start or Run</text>
<text x="2009.6" y="248.8" font-size="30" fill="#111" textLength="580.4" lengthAdjust="spacingAndGlyphs">ELECTRONIC SHIFT ON THE FLY (ESOF)</text>
<rect x="1009.0" y="249.5" width="564.0" height="140.7" fill="#f2f2f2" stroke="#5050e4" stroke-width="2.3"/>
<polyline points="1024.0,377.5 1024.0,264.4 1558.0,264.4 1558.0,377.5 1024.0,377.5" fill="none" stroke="#555" stroke-width="2.8" stroke-dasharray="8 6"/>
<polyline points="1051.0,249.5 1051.0,311.5" fill="none" stroke="#333" stroke-width="2" stroke-linejoin="miter" stroke-linecap="butt"/>
<polyline points="1051.0,340.7 1051.0,390.0" fill="none" stroke="#333" stroke-width="2" stroke-linejoin="miter" stroke-linecap="butt"/>
<polyline points="1051.0,282.0 1238.6,282.0 1238.6,311.5" fill="none" stroke="#333" stroke-width="2" stroke-linejoin="miter" stroke-linecap="butt"/>
<polyline points="1121.0,282.0 1121.0,311.5" fill="none" stroke="#333" stroke-width="2" stroke-linejoin="miter" stroke-linecap="butt"/>
<polyline points="1121.0,340.7 1121.0,390.0" fill="none" stroke="#333" stroke-width="2" stroke-linejoin="miter" stroke-linecap="butt"/>
<polyline points="1238.6,340.7 1238.6,390.0" fill="none" stroke="#333" stroke-width="2" stroke-linejoin="miter" stroke-linecap="butt"/>
<polyline points="1471.4,249.5 1471.4,311.5" fill="none" stroke="#333" stroke-width="2" stroke-linejoin="miter" stroke-linecap="butt"/>
<polyline points="1471.4,340.7 1471.4,390.0" fill="none" stroke="#333" stroke-width="2" stroke-linejoin="miter" stroke-linecap="butt"/>
<circle cx="1051.0" cy="282.0" r="2.6" fill="#222" stroke="none" stroke-width="1"/>
<circle cx="1121.0" cy="282.0" r="2.6" fill="#222" stroke="none" stroke-width="1"/>
<circle cx="1051.0" cy="311.5" r="2.4" fill="#222" stroke="none" stroke-width="1"/>
<circle cx="1051.0" cy="340.7" r="2.4" fill="#222" stroke="none" stroke-width="1"/>
<path d="M1051,311.5 C1059,313 1059,324.5 1051,326.1 C1043,327.7 1043,339 1051,340.7" fill="none" stroke="#222" stroke-width="1.8"/>
<circle cx="1121.0" cy="311.5" r="2.4" fill="#222" stroke="none" stroke-width="1"/>
<circle cx="1121.0" cy="340.7" r="2.4" fill="#222" stroke="none" stroke-width="1"/>
<path d="M1121,311.5 C1129,313 1129,324.5 1121,326.1 C1113,327.7 1113,339 1121,340.7" fill="none" stroke="#222" stroke-width="1.8"/>
<circle cx="1238.6" cy="311.5" r="2.4" fill="#222" stroke="none" stroke-width="1"/>
<circle cx="1238.6" cy="340.7" r="2.4" fill="#222" stroke="none" stroke-width="1"/>
<path d="M1238.6,311.5 C1246.6,313 1246.6,324.5 1238.6,326.1 C1230.6,327.7 1230.6,339 1238.6,340.7" fill="none" stroke="#222" stroke-width="1.8"/>
<circle cx="1471.4" cy="311.5" r="2.4" fill="#222" stroke="none" stroke-width="1"/>
<circle cx="1471.4" cy="340.7" r="2.4" fill="#222" stroke="none" stroke-width="1"/>
<path d="M1471.4,311.5 C1479.4,313 1479.4,324.5 1471.4,326.1 C1463.4,327.7 1463.4,339 1471.4,340.7" fill="none" stroke="#222" stroke-width="1.8"/>
<text x="1064.0" y="312.0" font-size="17.8" fill="#1e1e1e" textLength="32.8" lengthAdjust="spacingAndGlyphs">F20</text>
<text x="1064.0" y="332.6" font-size="17.8" fill="#1e1e1e" textLength="35.2" lengthAdjust="spacingAndGlyphs">20A</text>
<text x="1064.0" y="353.7" font-size="17.8" fill="#2626cf" textLength="41.7" lengthAdjust="spacingAndGlyphs">13-2</text>
<text x="1135.4" y="312.0" font-size="17.8" fill="#1e1e1e" textLength="32.8" lengthAdjust="spacingAndGlyphs">F68</text>
<text x="1135.4" y="332.6" font-size="17.8" fill="#1e1e1e" textLength="35.2" lengthAdjust="spacingAndGlyphs">20A</text>
<text x="1135.4" y="353.7" font-size="17.8" fill="#2626cf" textLength="41.7" lengthAdjust="spacingAndGlyphs">13-5</text>
<text x="1252.2" y="312.0" font-size="17.8" fill="#1e1e1e" textLength="32.8" lengthAdjust="spacingAndGlyphs">F29</text>
<text x="1252.2" y="332.6" font-size="17.8" fill="#1e1e1e" textLength="35.2" lengthAdjust="spacingAndGlyphs">10A</text>
<text x="1252.2" y="353.7" font-size="17.8" fill="#2626cf" textLength="41.7" lengthAdjust="spacingAndGlyphs">13-4</text>
<text x="1484.5" y="312.0" font-size="17.8" fill="#1e1e1e" textLength="32.8" lengthAdjust="spacingAndGlyphs">F54</text>
<text x="1484.5" y="332.6" font-size="17.8" fill="#1e1e1e" textLength="24.5" lengthAdjust="spacingAndGlyphs">5A</text>
<text x="1484.5" y="353.7" font-size="17.8" fill="#2626cf" textLength="51.3" lengthAdjust="spacingAndGlyphs">13-14</text>
<text x="1587.0" y="262.8" font-size="17.8" fill="#1e1e1e" textLength="77.2" lengthAdjust="spacingAndGlyphs">BATTERY</text>
<text x="1587.0" y="280.0" font-size="17.8" fill="#1e1e1e" textLength="91.0" lengthAdjust="spacingAndGlyphs">JUNCTION</text>
<text x="1587.0" y="297.7" font-size="17.8" fill="#1e1e1e" textLength="91.4" lengthAdjust="spacingAndGlyphs">BOX (BJB)</text>
<text x="1587.0" y="314.7" font-size="17.8" fill="#2626cf" textLength="40.4" lengthAdjust="spacingAndGlyphs">11-1</text>
<polyline points="1051.0,391.0 1051.0,714.3" fill="none" stroke="#4a5a48" stroke-width="10" stroke-linejoin="miter" stroke-linecap="butt"/>
<polyline points="1051.0,391.0 1051.0,714.3" fill="none" stroke="#167a10" stroke-width="8" stroke-linejoin="miter" stroke-linecap="butt"/>
<polyline points="1051.0,391.0 1051.0,714.3" fill="none" stroke="#8f3a08" stroke-width="2" stroke-linejoin="miter" stroke-linecap="butt"/>
<polyline points="1121.2,391.0 1121.2,714.3" fill="none" stroke="#4a5a48" stroke-width="10" stroke-linejoin="miter" stroke-linecap="butt"/>
<polyline points="1121.2,391.0 1121.2,714.3" fill="none" stroke="#167a10" stroke-width="8" stroke-linejoin="miter" stroke-linecap="butt"/>
<polyline points="1121.2,391.0 1121.2,714.3" fill="none" stroke="#8f3a08" stroke-width="2" stroke-linejoin="miter" stroke-linecap="butt"/>
<polyline points="1238.6,391.0 1238.6,463.0" fill="none" stroke="#555555" stroke-width="9.5" stroke-linejoin="miter" stroke-linecap="butt"/>
<polyline points="1238.6,391.0 1238.6,463.0" fill="none" stroke="#8a8a8a" stroke-width="7.5" stroke-linejoin="miter" stroke-linecap="butt"/>
<polyline points="1238.6,391.0 1238.6,463.0" fill="none" stroke="#c8303a" stroke-width="2.6" stroke-linejoin="miter" stroke-linecap="butt"/>
<polyline points="1471.4,391.0 1471.4,714.4" fill="none" stroke="#7f4a7c" stroke-width="9.3" stroke-linejoin="miter" stroke-linecap="butt"/>
<polyline points="1471.4,391.0 1471.4,714.4" fill="none" stroke="#dc82c4" stroke-width="7.3" stroke-linejoin="miter" stroke-linecap="butt"/>
<polyline points="1471.4,391.0 1471.4,714.4" fill="none" stroke="#f59088" stroke-width="4.2" stroke-linejoin="miter" stroke-linecap="butt"/>
<text transform="translate(1042.2,453.5) rotate(-90)" font-size="17.8" fill="#1e1e1e" textLength="56.5" lengthAdjust="spacingAndGlyphs">SBB20</text>
<text transform="translate(1074.0,453.5) rotate(-90)" font-size="17.8" fill="#1e1e1e" textLength="59.0" lengthAdjust="spacingAndGlyphs">GN-RD</text>
<text transform="translate(1112.8,453.5) rotate(-90)" font-size="17.8" fill="#1e1e1e" textLength="56.5" lengthAdjust="spacingAndGlyphs">SBB68</text>
<text transform="translate(1144.5,453.5) rotate(-90)" font-size="17.8" fill="#1e1e1e" textLength="59.0" lengthAdjust="spacingAndGlyphs">GN-RD</text>
<text transform="translate(1229.7,453.5) rotate(-90)" font-size="17.8" fill="#1e1e1e" textLength="56.5" lengthAdjust="spacingAndGlyphs">SBB29</text>
<text transform="translate(1261.7,453.5) rotate(-90)" font-size="17.8" fill="#1e1e1e" textLength="59.0" lengthAdjust="spacingAndGlyphs">GY-RD</text>
<text transform="translate(1461.3,453.5) rotate(-90)" font-size="17.8" fill="#1e1e1e" textLength="56.7" lengthAdjust="spacingAndGlyphs">CBB54</text>
<text transform="translate(1493.2,453.5) rotate(-90)" font-size="17.8" fill="#1e1e1e" textLength="55.5" lengthAdjust="spacingAndGlyphs">VT-OG</text>
<polyline points="1238.6,463.0 1238.6,524.7" fill="none" stroke="#222" stroke-width="2" stroke-linejoin="miter" stroke-linecap="butt"/>
<g transform="translate(1238.6,472.0) rotate(0)"><path d="M-9,9.8 Q-4.5,4 -1.2,3.2 M9,9.8 Q4.5,4 1.2,3.2" fill="none" stroke="#111" stroke-width="2.7"/><path d="M-1.9,9.7 V1.5 L0,0 L1.9,1.5 V9.7 Z" fill="#0d0d2a"/></g>
<text x="1217.5" y="474.4" font-size="17.8" fill="#2626cf">1</text>
<text x="1255.0" y="477.3" font-size="17.8" fill="#2626cf" textLength="56.0" lengthAdjust="spacingAndGlyphs">C1291</text>
<rect x="1187.0" y="491.5" width="113.0" height="101.5" fill="#f2f2f2" stroke="#5050e4" stroke-width="2.2"/>
<rect x="1198.4" y="501.7" width="91.4" height="79.0" fill="none" stroke="#444" stroke-width="2.2"/>
<polyline points="1238.6,491.5 1238.6,524.7" fill="none" stroke="#222" stroke-width="2" stroke-linejoin="miter" stroke-linecap="butt"/>
<path d="M1238.6,524.7 a4.60,4.60 0 0 1 0,9.20 a4.60,4.60 0 0 1 0,9.20 a4.60,4.60 0 0 1 0,9.20" fill="none" stroke="#222" stroke-width="1.8"/>
<path d="M1250.8,526.7 V552.3 M1255.7,526.7 V552.3" fill="none" stroke="#333" stroke-width="1.5"/>
<polyline points="1238.6,552.3 1238.6,622.8" fill="none" stroke="#222" stroke-width="2" stroke-linejoin="miter" stroke-linecap="butt"/>
<g transform="translate(1238.6,611.0) rotate(180)"><path d="M-9,9.8 Q-4.5,4 -1.2,3.2 M9,9.8 Q4.5,4 1.2,3.2" fill="none" stroke="#111" stroke-width="2.7"/><path d="M-1.9,9.7 V1.5 L0,0 L1.9,1.5 V9.7 Z" fill="#0d0d2a"/></g>
<text x="1310.9" y="504.1" font-size="17.8" fill="#1e1e1e" textLength="114.0" lengthAdjust="spacingAndGlyphs">INTEGRATED</text>
<text x="1310.9" y="521.8" font-size="17.8" fill="#1e1e1e" textLength="105.0" lengthAdjust="spacingAndGlyphs">WHEEL END</text>
<text x="1310.9" y="539.0" font-size="17.8" fill="#1e1e1e" textLength="150.6" lengthAdjust="spacingAndGlyphs">(IWE) SOLENOID</text>
<text x="1310.9" y="558.0" font-size="17.8" fill="#2626cf" textLength="51.0" lengthAdjust="spacingAndGlyphs">151-1</text>
<text x="1216.0" y="622.0" font-size="17.8" fill="#2626cf">2</text>
<text x="1255.3" y="622.0" font-size="17.8" fill="#2626cf" textLength="56.0" lengthAdjust="spacingAndGlyphs">C1291</text>
<polyline points="1238.6,622.8 1238.6,714.3" fill="none" stroke="#5a2a3a" stroke-width="9" stroke-linejoin="miter" stroke-linecap="butt"/>
<polyline points="1238.6,622.8 1238.6,714.3" fill="none" stroke="#8b3a4a" stroke-width="7.2" stroke-linejoin="miter" stroke-linecap="butt"/>
<polyline points="1238.6,622.8 1238.6,714.3" fill="none" stroke="#3a3ac0" stroke-width="2" stroke-linejoin="miter" stroke-linecap="butt"/>
<text transform="translate(1230.3,681.7) rotate(-90)" font-size="17.8" fill="#1e1e1e" textLength="56.7" lengthAdjust="spacingAndGlyphs">CCF05</text>
<text transform="translate(1262.0,681.7) rotate(-90)" font-size="17.8" fill="#1e1e1e" textLength="57.7" lengthAdjust="spacingAndGlyphs">BN-BU</text>
<polyline points="1475.0,492.3 1548.0,492.3" fill="none" stroke="#7f4a7c" stroke-width="9.3" stroke-linejoin="miter" stroke-linecap="butt"/>
<polyline points="1475.0,492.3 1548.0,492.3" fill="none" stroke="#dc82c4" stroke-width="7.3" stroke-linejoin="miter" stroke-linecap="butt"/>
<polyline points="1475.0,492.3 1548.0,492.3" fill="none" stroke="#f59088" stroke-width="4.2" stroke-linejoin="miter" stroke-linecap="butt"/>
<polyline points="1548.0,492.3 1561.4,492.3" fill="none" stroke="#333" stroke-width="2" stroke-linejoin="miter" stroke-linecap="butt"/>
<circle cx="1471.2" cy="492.3" r="8.8" fill="#ffffff" stroke="none" stroke-width="1"/>
<circle cx="1471.2" cy="492.3" r="7.2" fill="#0000ee" stroke="none" stroke-width="1"/>
<path d="M1561.4,476.5 H1606 L1620,491.1 L1606,505.7 H1561.4 Z" fill="#f0f0f0" stroke="#333" stroke-width="2"/>
<text x="1481.4" y="482.9" font-size="17.8" fill="#2626cf" textLength="45.0" lengthAdjust="spacingAndGlyphs">S118</text>
<text x="1634.7" y="485.7" font-size="17.8" fill="#1e1e1e" textLength="254.5" lengthAdjust="spacingAndGlyphs">POWER DISTRIBUTION / SJB</text>
<text x="1634.7" y="502.8" font-size="17.8" fill="#2626cf" textLength="51.3" lengthAdjust="spacingAndGlyphs">13-14</text>
<rect x="1002.6" y="743.3" width="532.5" height="505.7" fill="#f2f2f2" stroke="#5050e4" stroke-width="2.2"/>
<polyline points="1017.0,757.6 1520.4,757.6" fill="none" stroke="#333" stroke-width="2.2" stroke-dasharray="7 6"/>
<polyline points="1017.0,757.6 1017.0,1234.8" fill="none" stroke="#555" stroke-width="2.8" stroke-dasharray="8 6"/>
<polyline points="1520.4,757.6 1520.4,1234.8" fill="none" stroke="#666" stroke-width="3.2" stroke-dasharray="8 5"/>
<polyline points="1017.0,1234.8 1520.4,1234.8" fill="none" stroke="#333" stroke-width="2.2" stroke-dasharray="7 6"/>
<polyline points="1051.0,714.0 1051.0,757.6" fill="none" stroke="#222" stroke-width="2" stroke-linejoin="miter" stroke-linecap="butt"/>
<g transform="translate(1051.0,723.6) rotate(0)"><path d="M-9,9.8 Q-4.5,4 -1.2,3.2 M9,9.8 Q4.5,4 1.2,3.2" fill="none" stroke="#111" stroke-width="2.7"/><path d="M-1.9,9.7 V1.5 L0,0 L1.9,1.5 V9.7 Z" fill="#0d0d2a"/></g>
<polyline points="1121.2,714.0 1121.2,757.6" fill="none" stroke="#222" stroke-width="2" stroke-linejoin="miter" stroke-linecap="butt"/>
<g transform="translate(1121.2,723.6) rotate(0)"><path d="M-9,9.8 Q-4.5,4 -1.2,3.2 M9,9.8 Q4.5,4 1.2,3.2" fill="none" stroke="#111" stroke-width="2.7"/><path d="M-1.9,9.7 V1.5 L0,0 L1.9,1.5 V9.7 Z" fill="#0d0d2a"/></g>
<polyline points="1238.6,714.0 1238.6,757.6" fill="none" stroke="#222" stroke-width="2" stroke-linejoin="miter" stroke-linecap="butt"/>
<g transform="translate(1238.6,723.6) rotate(0)"><path d="M-9,9.8 Q-4.5,4 -1.2,3.2 M9,9.8 Q4.5,4 1.2,3.2" fill="none" stroke="#111" stroke-width="2.7"/><path d="M-1.9,9.7 V1.5 L0,0 L1.9,1.5 V9.7 Z" fill="#0d0d2a"/></g>
<polyline points="1471.4,714.0 1471.4,757.6" fill="none" stroke="#222" stroke-width="2" stroke-linejoin="miter" stroke-linecap="butt"/>
<g transform="translate(1471.4,723.6) rotate(0)"><path d="M-9,9.8 Q-4.5,4 -1.2,3.2 M9,9.8 Q4.5,4 1.2,3.2" fill="none" stroke="#111" stroke-width="2.7"/><path d="M-1.9,9.7 V1.5 L0,0 L1.9,1.5 V9.7 Z" fill="#0d0d2a"/></g>
<polyline points="1056.4,738.0 1121.0,738.0" fill="none" stroke="#666" stroke-width="2.6" stroke-dasharray="7 5"/>
<polyline points="1247.0,738.0 1471.0,738.0" fill="none" stroke="#666" stroke-width="2.6" stroke-dasharray="7 5"/>
<text x="1027.8" y="728.7" font-size="17.8" fill="#2626cf">6</text>
<text x="1099.2" y="728.7" font-size="17.8" fill="#2626cf">7</text>
<text x="1142.8" y="728.7" font-size="17.8" fill="#2626cf" textLength="68.2" lengthAdjust="spacingAndGlyphs">C2371B</text>
<text x="1216.0" y="728.7" font-size="17.8" fill="#2626cf">6</text>
<text x="1450.4" y="729.5" font-size="17.8" fill="#2626cf">7</text>
<text x="1489.7" y="729.5" font-size="17.8" fill="#2626cf" textLength="69.3" lengthAdjust="spacingAndGlyphs">C2371A</text>
<text x="1027.3" y="783.0" font-size="17.8" fill="#1e1e1e" textLength="55.3" lengthAdjust="spacingAndGlyphs">VBATT</text>
<text x="1097.9" y="783.0" font-size="17.8" fill="#1e1e1e" textLength="55.3" lengthAdjust="spacingAndGlyphs">VBATT</text>
<text x="1204.0" y="783.0" font-size="17.8" fill="#1e1e1e" textLength="99.6" lengthAdjust="spacingAndGlyphs">IWE CNTRL</text>
<text x="1446.5" y="784.0" font-size="17.8" fill="#1e1e1e" textLength="52.0" lengthAdjust="spacingAndGlyphs">VPWR</text>
<text x="1544.6" y="758.0" font-size="17.8" fill="#1e1e1e" textLength="146.3" lengthAdjust="spacingAndGlyphs">TRANSFER CASE</text>
<text x="1544.6" y="775.7" font-size="17.8" fill="#1e1e1e" textLength="167.0" lengthAdjust="spacingAndGlyphs">CONTROL MODULE</text>
<text x="1544.6" y="792.5" font-size="17.8" fill="#1e1e1e" textLength="65.3" lengthAdjust="spacingAndGlyphs">(TCCM)</text>
<text x="1544.6" y="810.0" font-size="17.8" fill="#2626cf" textLength="63.6" lengthAdjust="spacingAndGlyphs">151-24</text>
<text x="1039.7" y="1226.8" font-size="17.8" fill="#1e1e1e" textLength="56.8" lengthAdjust="spacingAndGlyphs">GND 1</text>
<text x="1187.3" y="1226.8" font-size="17.8" fill="#1e1e1e" textLength="57.3" lengthAdjust="spacingAndGlyphs">GND 2</text>
<polyline points="1326.0,955.5 1326.0,835.8 1970.0,835.8 1970.0,350.6 2560.5,350.6 2560.5,955.5 1326.0,955.5" fill="none" stroke="#222" stroke-width="2" stroke-dasharray="7 5"/>
<text x="2476.4" y="342.9" font-size="17.8" fill="#1e1e1e" textLength="99.4" lengthAdjust="spacingAndGlyphs">SVT Raptor</text>
<text x="1336.8" y="879.5" font-size="17.8" fill="#1e1e1e" textLength="181.8" lengthAdjust="spacingAndGlyphs">OFF ROAD EASY LED</text>
<text x="1352.4" y="931.2" font-size="17.8" fill="#1e1e1e" textLength="166.0" lengthAdjust="spacingAndGlyphs">OFF ROAD SWITCH</text>
<polyline points="1517.0,873.2 1563.5,873.2" fill="none" stroke="#222" stroke-width="2" stroke-linejoin="miter" stroke-linecap="butt"/>
<polyline points="1517.0,923.9 1563.5,923.9" fill="none" stroke="#222" stroke-width="2" stroke-linejoin="miter" stroke-linecap="butt"/>
<g transform="translate(1553.7,873.2) rotate(90)"><path d="M-9,9.8 Q-4.5,4 -1.2,3.2 M9,9.8 Q4.5,4 1.2,3.2" fill="none" stroke="#111" stroke-width="2.7"/><path d="M-1.9,9.7 V1.5 L0,0 L1.9,1.5 V9.7 Z" fill="#0d0d2a"/></g>
<g transform="translate(1553.7,923.9) rotate(90)"><path d="M-9,9.8 Q-4.5,4 -1.2,3.2 M9,9.8 Q4.5,4 1.2,3.2" fill="none" stroke="#111" stroke-width="2.7"/><path d="M-1.9,9.7 V1.5 L0,0 L1.9,1.5 V9.7 Z" fill="#0d0d2a"/></g>
<polyline points="1540.0,880.0 1540.0,1093.0" fill="none" stroke="#222" stroke-width="2" stroke-dasharray="7 5"/>
<polyline points="1563.5,873.0 1810.0,873.0" fill="none" stroke="#7a2a2a" stroke-width="8.8" stroke-linejoin="miter" stroke-linecap="butt"/>
<polyline points="1563.5,873.0 1810.0,873.0" fill="none" stroke="#a82a2a" stroke-width="6.8" stroke-linejoin="miter" stroke-linecap="butt"/>
<polyline points="1563.5,923.9 1810.0,923.9" fill="none" stroke="#7f7f30" stroke-width="9.4" stroke-linejoin="miter" stroke-linecap="butt"/>
<polyline points="1563.5,923.9 1810.0,923.9" fill="none" stroke="#f3e62a" stroke-width="7.4" stroke-linejoin="miter" stroke-linecap="butt"/>
<polyline points="1563.5,923.9 1810.0,923.9" fill="none" stroke="#e0b040" stroke-width="2" stroke-linejoin="miter" stroke-linecap="butt"/>
<polyline points="1810.0,873.0 1839.0,873.0" fill="none" stroke="#222" stroke-width="2" stroke-linejoin="miter" stroke-linecap="butt"/>
<g transform="translate(1828.0,873.0) rotate(90)"><path d="M-9,9.8 Q-4.5,4 -1.2,3.2 M9,9.8 Q4.5,4 1.2,3.2" fill="none" stroke="#111" stroke-width="2.7"/><path d="M-1.9,9.7 V1.5 L0,0 L1.9,1.5 V9.7 Z" fill="#0d0d2a"/></g>
<polyline points="1810.0,923.9 1839.0,923.9" fill="none" stroke="#222" stroke-width="2" stroke-linejoin="miter" stroke-linecap="butt"/>
<g transform="translate(1828.0,923.9) rotate(90)"><path d="M-9,9.8 Q-4.5,4 -1.2,3.2 M9,9.8 Q4.5,4 1.2,3.2" fill="none" stroke="#111" stroke-width="2.7"/><path d="M-1.9,9.7 V1.5 L0,0 L1.9,1.5 V9.7 Z" fill="#0d0d2a"/></g>
<polyline points="1814.6,882.0 1814.6,933.0" fill="none" stroke="#222" stroke-width="2" stroke-dasharray="6 5"/>
<polyline points="1839.0,873.0 2000.0,873.0 2000.0,466.8 2084.2,466.8" fill="none" stroke="#7a2a2a" stroke-width="8.8" stroke-linejoin="miter" stroke-linecap="butt"/>
<polyline points="1839.0,873.0 2000.0,873.0 2000.0,466.8 2084.2,466.8" fill="none" stroke="#a82a2a" stroke-width="6.8" stroke-linejoin="miter" stroke-linecap="butt"/>
<polyline points="2113.4,466.8 2318.7,466.8 2318.7,639.0" fill="none" stroke="#7a2a2a" stroke-width="8.8" stroke-linejoin="miter" stroke-linecap="butt"/>
<polyline points="2113.4,466.8 2318.7,466.8 2318.7,639.0" fill="none" stroke="#a82a2a" stroke-width="6.8" stroke-linejoin="miter" stroke-linecap="butt"/>
<polyline points="1839.0,923.9 2043.7,923.9 2043.7,520.2 2084.2,520.2" fill="none" stroke="#7f7f30" stroke-width="9.4" stroke-linejoin="miter" stroke-linecap="butt"/>
<polyline points="1839.0,923.9 2043.7,923.9 2043.7,520.2 2084.2,520.2" fill="none" stroke="#f3e62a" stroke-width="7.4" stroke-linejoin="miter" stroke-linecap="butt"/>
<polyline points="1839.0,923.9 2043.7,923.9 2043.7,520.2 2084.2,520.2" fill="none" stroke="#e0b040" stroke-width="2" stroke-linejoin="miter" stroke-linecap="butt"/>
<polyline points="2113.4,520.2 2190.6,520.2 2190.6,639.0" fill="none" stroke="#7f7f30" stroke-width="9.4" stroke-linejoin="miter" stroke-linecap="butt"/>
<polyline points="2113.4,520.2 2190.6,520.2 2190.6,639.0" fill="none" stroke="#f3e62a" stroke-width="7.4" stroke-linejoin="miter" stroke-linecap="butt"/>
<polyline points="2113.4,520.2 2190.6,520.2 2190.6,639.0" fill="none" stroke="#e0b040" stroke-width="2" stroke-linejoin="miter" stroke-linecap="butt"/>
<text x="1549.3" y="862.3" font-size="17.8" fill="#2626cf" textLength="69.3" lengthAdjust="spacingAndGlyphs">C2371A</text>
<text x="1552.9" y="893.5" font-size="17.8" fill="#2626cf">8</text>
<text x="1556.8" y="943.9" font-size="17.8" fill="#2626cf">12</text>
<text x="1679.7" y="864.6" font-size="17.8" fill="#1e1e1e" textLength="55.5" lengthAdjust="spacingAndGlyphs">CCF01</text>
<text x="1748.9" y="864.6" font-size="17.8" fill="#1e1e1e" textLength="25.4" lengthAdjust="spacingAndGlyphs">BN</text>
<text x="1679.7" y="914.9" font-size="17.8" fill="#1e1e1e" textLength="55.5" lengthAdjust="spacingAndGlyphs">CCF11</text>
<text x="1748.9" y="914.9" font-size="17.8" fill="#1e1e1e" textLength="52.0" lengthAdjust="spacingAndGlyphs">YE-VT</text>
<text x="1813.6" y="858.0" font-size="17.8" fill="#2626cf" textLength="57.8" lengthAdjust="spacingAndGlyphs">C3047</text>
<text x="1826.9" y="893.7" font-size="17.8" fill="#2626cf">12</text>
<text x="1830.2" y="943.9" font-size="17.8" fill="#2626cf">11</text>
<text x="1885.0" y="864.6" font-size="17.8" fill="#1e1e1e" textLength="55.5" lengthAdjust="spacingAndGlyphs">CCF01</text>
<text x="1954.2" y="864.6" font-size="17.8" fill="#1e1e1e" textLength="25.4" lengthAdjust="spacingAndGlyphs">BN</text>
<text x="1885.0" y="914.9" font-size="17.8" fill="#1e1e1e" textLength="55.5" lengthAdjust="spacingAndGlyphs">CCF11</text>
<text x="1954.2" y="914.9" font-size="17.8" fill="#1e1e1e" textLength="52.0" lengthAdjust="spacingAndGlyphs">YE-VT</text>
<polyline points="2084.2,466.8 2113.4,466.8" fill="none" stroke="#222" stroke-width="2" stroke-linejoin="miter" stroke-linecap="butt"/>
<g transform="translate(2103.7,466.8) rotate(90)"><path d="M-9,9.8 Q-4.5,4 -1.2,3.2 M9,9.8 Q4.5,4 1.2,3.2" fill="none" stroke="#111" stroke-width="2.7"/><path d="M-1.9,9.7 V1.5 L0,0 L1.9,1.5 V9.7 Z" fill="#0d0d2a"/></g>
<polyline points="2084.2,520.2 2113.4,520.2" fill="none" stroke="#222" stroke-width="2" stroke-linejoin="miter" stroke-linecap="butt"/>
<g transform="translate(2103.7,520.2) rotate(90)"><path d="M-9,9.8 Q-4.5,4 -1.2,3.2 M9,9.8 Q4.5,4 1.2,3.2" fill="none" stroke="#111" stroke-width="2.7"/><path d="M-1.9,9.7 V1.5 L0,0 L1.9,1.5 V9.7 Z" fill="#0d0d2a"/></g>
<polyline points="2087.4,472.0 2087.4,516.0" fill="none" stroke="#333" stroke-width="1.8" stroke-dasharray="5 4"/>
<text x="2083.2" y="450.8" font-size="17.8" fill="#2626cf" textLength="45.8" lengthAdjust="spacingAndGlyphs">C328</text>
<text x="2103.3" y="490.0" font-size="17.8" fill="#2626cf">2</text>
<text x="2102.9" y="544.2" font-size="17.8" fill="#2626cf">4</text>
<polyline points="2244.3,639.0 2244.3,405.7 2293.0,405.7" fill="none" stroke="#7a3f7a" stroke-width="9" stroke-linejoin="miter" stroke-linecap="butt"/>
<polyline points="2244.3,639.0 2244.3,405.7 2293.0,405.7" fill="none" stroke="#cc80cc" stroke-width="7" stroke-linejoin="miter" stroke-linecap="butt"/>
<polyline points="2244.3,639.0 2244.3,405.7 2293.0,405.7" fill="none" stroke="#c078b8" stroke-width="2" stroke-linejoin="miter" stroke-linecap="butt"/>
<polyline points="2293.0,405.7 2307.8,405.7" fill="none" stroke="#333" stroke-width="2" stroke-linejoin="miter" stroke-linecap="butt"/>
<path d="M2307.8,405.7 L2322,391.4 H2366 V420.3 H2322 Z" fill="#f0f0f0" stroke="#333" stroke-width="2"/>
<text x="2375.6" y="392.7" font-size="17.8" fill="#1e1e1e" textLength="124.9" lengthAdjust="spacingAndGlyphs">CLUSTER AND</text>
<text x="2375.6" y="410.4" font-size="17.8" fill="#1e1e1e" textLength="191.9" lengthAdjust="spacingAndGlyphs">PANEL ILLUMINATION</text>
<text x="2375.6" y="428.0" font-size="17.8" fill="#2626cf" textLength="41.8" lengthAdjust="spacingAndGlyphs">71-3</text>
<text transform="translate(2182.8,622.9) rotate(-90)" font-size="17.8" fill="#1e1e1e" textLength="54.8" lengthAdjust="spacingAndGlyphs">CCF11</text>
<text transform="translate(2214.6,625.5) rotate(-90)" font-size="17.8" fill="#1e1e1e" textLength="52.3" lengthAdjust="spacingAndGlyphs">YE-VT</text>
<text transform="translate(2236.0,622.9) rotate(-90)" font-size="17.8" fill="#1e1e1e" textLength="55.8" lengthAdjust="spacingAndGlyphs">VLN04</text>
<text transform="translate(2268.4,625.5) rotate(-90)" font-size="17.8" fill="#1e1e1e" textLength="53.9" lengthAdjust="spacingAndGlyphs">VT-GY</text>
<text transform="translate(2311.9,622.9) rotate(-90)" font-size="17.8" fill="#1e1e1e" textLength="55.4" lengthAdjust="spacingAndGlyphs">CCF01</text>
<text transform="translate(2343.5,625.5) rotate(-90)" font-size="17.8" fill="#1e1e1e" textLength="24.9" lengthAdjust="spacingAndGlyphs">BN</text>
<g transform="translate(2190.7,647.0) rotate(0)"><path d="M-9,9.8 Q-4.5,4 -1.2,3.2 M9,9.8 Q4.5,4 1.2,3.2" fill="none" stroke="#111" stroke-width="2.7"/><path d="M-1.9,9.7 V1.5 L0,0 L1.9,1.5 V9.7 Z" fill="#0d0d2a"/></g>
<g transform="translate(2244.3,647.0) rotate(0)"><path d="M-9,9.8 Q-4.5,4 -1.2,3.2 M9,9.8 Q4.5,4 1.2,3.2" fill="none" stroke="#111" stroke-width="2.7"/><path d="M-1.9,9.7 V1.5 L0,0 L1.9,1.5 V9.7 Z" fill="#0d0d2a"/></g>
<g transform="translate(2319.6,647.0) rotate(0)"><path d="M-9,9.8 Q-4.5,4 -1.2,3.2 M9,9.8 Q4.5,4 1.2,3.2" fill="none" stroke="#111" stroke-width="2.7"/><path d="M-1.9,9.7 V1.5 L0,0 L1.9,1.5 V9.7 Z" fill="#0d0d2a"/></g>
<text x="2170.0" y="653.7" font-size="17.8" fill="#2626cf">1</text>
<text x="2223.8" y="653.7" font-size="17.8" fill="#2626cf">3</text>
<text x="2297.8" y="653.7" font-size="17.8" fill="#2626cf">4</text>
<text x="2333.4" y="653.7" font-size="17.8" fill="#2626cf" textLength="56.8" lengthAdjust="spacingAndGlyphs">C3393</text>
<rect x="2157.0" y="669.0" width="248.4" height="142.5" fill="#f2f2f2" stroke="#5050e4" stroke-width="2.2"/>
<rect x="2169.6" y="680.0" width="226.0" height="121.6" fill="none" stroke="#444" stroke-width="2.2"/>
<polyline points="2190.7,662.5 2319.6,662.5" fill="none" stroke="#777" stroke-width="2.6" stroke-dasharray="7 5"/>
<polyline points="2190.7,639.0 2190.7,715.3" fill="none" stroke="#555" stroke-width="2" stroke-linejoin="miter" stroke-linecap="butt"/>
<circle cx="2190.7" cy="718.3" r="3.0" fill="#f2f2f2" stroke="#333" stroke-width="1.6"/>
<path d="M2192.2,721 L2208,746" fill="none" stroke="#222" stroke-width="1.8"/>
<path d="M2204,742 L2209,744 L2207,749 Z" fill="#222" stroke="none" stroke-width="1"/>
<circle cx="2190.7" cy="749.3" r="3.0" fill="#fff" stroke="#333" stroke-width="1.6"/>
<circle cx="2209.6" cy="749.5" r="3.0" fill="#fff" stroke="#333" stroke-width="1.6"/>
<polyline points="2190.7,752.3 2190.7,841.0" fill="none" stroke="#555" stroke-width="2" stroke-linejoin="miter" stroke-linecap="butt"/>
<polyline points="2244.3,639.0 2244.3,703.0" fill="none" stroke="#555" stroke-width="2" stroke-linejoin="miter" stroke-linecap="butt"/>
<rect x="2236.5" y="703.0" width="15.6" height="29.5" fill="none" stroke="#444" stroke-width="2" rx="2"/>
<path d="M2241.3,706 L2249.3,711 L2239.3,716 L2249.3,721 L2239.3,726 L2247.3,730" fill="none" stroke="#333" stroke-width="1.5"/>
<polyline points="2244.3,732.5 2244.3,745.7" fill="none" stroke="#555" stroke-width="2" stroke-linejoin="miter" stroke-linecap="butt"/>
<circle cx="2244.3" cy="758.9" r="13.0" fill="none" stroke="#333" stroke-width="1.8"/>
<path d="M2235.8,751 H2252.8 L2244.3,764.5 Z" fill="none" stroke="#333" stroke-width="1.6"/>
<path d="M2235.3,765.5 H2253.3" fill="none" stroke="#333" stroke-width="1.8"/>
<polyline points="2244.3,745.7 2244.3,841.0" fill="none" stroke="#555" stroke-width="2" stroke-linejoin="miter" stroke-linecap="butt"/>
<path d="M2252.3,766 L2259.3,773 M2257.3,762 L2264.3,769" fill="none" stroke="#333" stroke-width="1.6"/>
<path d="M2259.3,773 l-4,-1 l3,-3 Z M2264.3,769 l-4,-1 l3,-3 Z" fill="#333" stroke="#333" stroke-width="1"/>
<polyline points="2319.6,639.0 2319.6,703.0" fill="none" stroke="#555" stroke-width="2" stroke-linejoin="miter" stroke-linecap="butt"/>
<rect x="2311.8" y="703.0" width="15.6" height="29.5" fill="none" stroke="#444" stroke-width="2" rx="2"/>
<path d="M2316.6,706 L2324.6,711 L2314.6,716 L2324.6,721 L2314.6,726 L2322.6,730" fill="none" stroke="#333" stroke-width="1.5"/>
<polyline points="2319.6,732.5 2319.6,745.7" fill="none" stroke="#555" stroke-width="2" stroke-linejoin="miter" stroke-linecap="butt"/>
<circle cx="2319.6" cy="758.9" r="13.0" fill="none" stroke="#333" stroke-width="1.8"/>
<path d="M2311.1,751 H2328.1 L2319.6,764.5 Z" fill="none" stroke="#333" stroke-width="1.6"/>
<path d="M2310.6,765.5 H2328.6" fill="none" stroke="#333" stroke-width="1.8"/>
<polyline points="2319.6,745.7 2319.6,841.0" fill="none" stroke="#555" stroke-width="2" stroke-linejoin="miter" stroke-linecap="butt"/>
<path d="M2327.6,766 L2334.6,773 M2332.6,762 L2339.6,769" fill="none" stroke="#333" stroke-width="1.6"/>
<path d="M2334.6,773 l-4,-1 l3,-3 Z M2339.6,769 l-4,-1 l3,-3 Z" fill="#333" stroke="#333" stroke-width="1"/>
<text x="2254.2" y="793.8" font-size="17.8" fill="#1e1e1e" textLength="60.3" lengthAdjust="spacingAndGlyphs">GREEN</text>
<text x="2327.7" y="793.8" font-size="17.8" fill="#1e1e1e" textLength="61.4" lengthAdjust="spacingAndGlyphs">AMBER</text>
<text x="2417.6" y="681.3" font-size="17.8" fill="#1e1e1e" textLength="92.3" lengthAdjust="spacingAndGlyphs">OFF-ROAD</text>
<text x="2417.6" y="698.6" font-size="17.8" fill="#1e1e1e" textLength="130.8" lengthAdjust="spacingAndGlyphs">MODE SWITCH</text>
<text x="2417.6" y="716.7" font-size="17.8" fill="#2626cf" textLength="62.9" lengthAdjust="spacingAndGlyphs">151-23</text>
<polyline points="2190.7,817.6 2319.6,817.6" fill="none" stroke="#777" stroke-width="2.6" stroke-dasharray="7 5"/>
<g transform="translate(2190.8,830.1) rotate(180)"><path d="M-9,9.8 Q-4.5,4 -1.2,3.2 M9,9.8 Q4.5,4 1.2,3.2" fill="none" stroke="#111" stroke-width="2.7"/><path d="M-1.9,9.7 V1.5 L0,0 L1.9,1.5 V9.7 Z" fill="#0d0d2a"/></g>
<g transform="translate(2244.0,830.1) rotate(180)"><path d="M-9,9.8 Q-4.5,4 -1.2,3.2 M9,9.8 Q4.5,4 1.2,3.2" fill="none" stroke="#111" stroke-width="2.7"/><path d="M-1.9,9.7 V1.5 L0,0 L1.9,1.5 V9.7 Z" fill="#0d0d2a"/></g>
<g transform="translate(2319.6,830.1) rotate(180)"><path d="M-9,9.8 Q-4.5,4 -1.2,3.2 M9,9.8 Q4.5,4 1.2,3.2" fill="none" stroke="#111" stroke-width="2.7"/><path d="M-1.9,9.7 V1.5 L0,0 L1.9,1.5 V9.7 Z" fill="#0d0d2a"/></g>
<text x="2169.9" y="843.2" font-size="17.8" fill="#2626cf">6</text>
<text x="2223.0" y="843.2" font-size="17.8" fill="#2626cf">2</text>
<text x="2298.7" y="843.2" font-size="17.8" fill="#2626cf">5</text>
<text x="2329.0" y="843.2" font-size="17.8" fill="#2626cf" textLength="56.8" lengthAdjust="spacingAndGlyphs">C3393</text>
<polyline points="2190.8,841.3 2190.8,1023.0 2244.0,1023.0" fill="none" stroke="#111111" stroke-width="9" stroke-linejoin="miter" stroke-linecap="butt"/>
<polyline points="2190.8,841.3 2190.8,1023.0 2244.0,1023.0" fill="none" stroke="#8a8a8a" stroke-width="2.2" stroke-linejoin="miter" stroke-linecap="butt"/>
<polyline points="2244.0,841.3 2244.0,1109.3" fill="none" stroke="#111111" stroke-width="9" stroke-linejoin="miter" stroke-linecap="butt"/>
<polyline points="2244.0,841.3 2244.0,1109.3" fill="none" stroke="#8a8a8a" stroke-width="2.2" stroke-linejoin="miter" stroke-linecap="butt"/>
<text transform="translate(2182.6,907.7) rotate(-90)" font-size="17.8" fill="#1e1e1e" textLength="59.0" lengthAdjust="spacingAndGlyphs">GD138</text>
<text transform="translate(2214.3,907.7) rotate(-90)" font-size="17.8" fill="#1e1e1e" textLength="58.0" lengthAdjust="spacingAndGlyphs">BK-WH</text>
<text transform="translate(2236.0,907.7) rotate(-90)" font-size="17.8" fill="#1e1e1e" textLength="59.0" lengthAdjust="spacingAndGlyphs">GD138</text>
<text transform="translate(2267.5,907.7) rotate(-90)" font-size="17.8" fill="#1e1e1e" textLength="58.0" lengthAdjust="spacingAndGlyphs">BK-WH</text>
<polyline points="2319.6,841.3 2319.6,923.5 2330.8,923.5" fill="none" stroke="#7a4a7a" stroke-width="9.1" stroke-linejoin="miter" stroke-linecap="butt"/>
<polyline points="2319.6,841.3 2319.6,923.5 2330.8,923.5" fill="none" stroke="#e080d8" stroke-width="7.1" stroke-linejoin="miter" stroke-linecap="butt"/>
<polyline points="2319.6,841.3 2319.6,923.5 2330.8,923.5" fill="none" stroke="#c85090" stroke-width="3" stroke-linejoin="miter" stroke-linecap="butt"/>
<polyline points="2330.8,923.5 2345.3,923.5" fill="none" stroke="#333" stroke-width="2" stroke-linejoin="miter" stroke-linecap="butt"/>
<path d="M2345.3,923.5 L2360.3,909.5 H2404 V938.4 H2360.3 Z" fill="#f0f0f0" stroke="#333" stroke-width="2"/>
<text x="2381.0" y="930.0" font-size="17.8" fill="#1e1e1e" text-anchor="middle">A</text>
<text transform="translate(2311.4,907.7) rotate(-90)" font-size="17.8" fill="#1e1e1e" textLength="55.2" lengthAdjust="spacingAndGlyphs">CBP34</text>
<text transform="translate(2343.0,910.5) rotate(-90)" font-size="17.8" fill="#1e1e1e" textLength="54.3" lengthAdjust="spacingAndGlyphs">VT-BN</text>
<text x="2413.4" y="911.3" font-size="17.8" fill="#1e1e1e" textLength="116.8" lengthAdjust="spacingAndGlyphs">FOUR WHEEL</text>
<text x="2413.4" y="928.1" font-size="17.8" fill="#1e1e1e" textLength="144.8" lengthAdjust="spacingAndGlyphs">DRIVE SYSTEMS</text>
<text x="2413.4" y="945.0" font-size="17.8" fill="#2626cf" textLength="41.2" lengthAdjust="spacingAndGlyphs">34-2</text>
<circle cx="2244.1" cy="1022.9" r="8.8" fill="#ffffff" stroke="none" stroke-width="1"/>
<circle cx="2244.1" cy="1022.9" r="7.2" fill="#0000ee" stroke="none" stroke-width="1"/>
<text x="2258.9" y="1028.7" font-size="17.8" fill="#2626cf" textLength="44.6" lengthAdjust="spacingAndGlyphs">S329</text>
<text transform="translate(2236.2,1092.0) rotate(-90)" font-size="17.8" fill="#1e1e1e" textLength="59.8" lengthAdjust="spacingAndGlyphs">GD138</text>
<text transform="translate(2267.2,1092.0) rotate(-90)" font-size="17.8" fill="#1e1e1e" textLength="60.4" lengthAdjust="spacingAndGlyphs">BK-WH</text>
<polyline points="2244.0,1109.0 2244.0,1138.5" fill="none" stroke="#666" stroke-width="2" stroke-linejoin="miter" stroke-linecap="butt"/>
<g transform="translate(2244.0,1118.5) rotate(0)"><path d="M-9,9.8 Q-4.5,4 -1.2,3.2 M9,9.8 Q4.5,4 1.2,3.2" fill="none" stroke="#111" stroke-width="2.7"/><path d="M-1.9,9.7 V1.5 L0,0 L1.9,1.5 V9.7 Z" fill="#0d0d2a"/></g>
<text x="2224.0" y="1124.0" font-size="17.8" fill="#2626cf">1</text>
<text x="2258.9" y="1124.0" font-size="17.8" fill="#2626cf" textLength="45.3" lengthAdjust="spacingAndGlyphs">C328</text>
<polyline points="2244.0,1138.5 2244.0,1407.3" fill="none" stroke="#111111" stroke-width="9" stroke-linejoin="miter" stroke-linecap="butt"/>
<polyline points="2244.0,1138.5 2244.0,1407.3" fill="none" stroke="#8a8a8a" stroke-width="2.2" stroke-linejoin="miter" stroke-linecap="butt"/>
<text transform="translate(2235.8,1343.7) rotate(-90)" font-size="17.8" fill="#1e1e1e" textLength="59.7" lengthAdjust="spacingAndGlyphs">GD138</text>
<text transform="translate(2267.4,1343.7) rotate(-90)" font-size="17.8" fill="#1e1e1e" textLength="59.7" lengthAdjust="spacingAndGlyphs">BK-WH</text>
<polyline points="2244.0,1406.0 2244.0,1422.0" fill="none" stroke="#555" stroke-width="1.8" stroke-linejoin="miter" stroke-linecap="butt"/>
<path d="M2234,1422 H2254 M2238,1428 H2250 M2242,1433 H2246" fill="none" stroke="#444" stroke-width="1.8"/>
<text x="2270.4" y="1410.0" font-size="17.8" fill="#2626cf" textLength="46.4" lengthAdjust="spacingAndGlyphs">G203</text>
<text x="2270.4" y="1427.4" font-size="17.8" fill="#2626cf" textLength="51.7" lengthAdjust="spacingAndGlyphs">10-16</text>
<text x="1429.3" y="996.8" font-size="17.8" fill="#1e1e1e" textLength="87.3" lengthAdjust="spacingAndGlyphs">HS CAN +</text>
<text x="1427.7" y="1048.7" font-size="17.8" fill="#1e1e1e" textLength="82.3" lengthAdjust="spacingAndGlyphs">HS CAN -</text>
<polyline points="1520.0,990.1 1564.3,990.1" fill="none" stroke="#222" stroke-width="2" stroke-linejoin="miter" stroke-linecap="butt"/>
<g transform="translate(1555.3,990.1) rotate(90)"><path d="M-9,9.8 Q-4.5,4 -1.2,3.2 M9,9.8 Q4.5,4 1.2,3.2" fill="none" stroke="#111" stroke-width="2.7"/><path d="M-1.9,9.7 V1.5 L0,0 L1.9,1.5 V9.7 Z" fill="#0d0d2a"/></g>
<polyline points="1520.0,1040.9 1564.3,1040.9" fill="none" stroke="#222" stroke-width="2" stroke-linejoin="miter" stroke-linecap="butt"/>
<g transform="translate(1555.3,1040.9) rotate(90)"><path d="M-9,9.8 Q-4.5,4 -1.2,3.2 M9,9.8 Q4.5,4 1.2,3.2" fill="none" stroke="#111" stroke-width="2.7"/><path d="M-1.9,9.7 V1.5 L0,0 L1.9,1.5 V9.7 Z" fill="#0d0d2a"/></g>
<polyline points="1564.3,990.1 1835.0,990.1" fill="none" stroke="#6a6a6a" stroke-width="10" stroke-linejoin="miter" stroke-linecap="butt"/>
<polyline points="1564.3,990.1 1835.0,990.1" fill="none" stroke="#ffffff" stroke-width="6.6" stroke-linejoin="miter" stroke-linecap="butt"/>
<polyline points="1564.3,990.1 1835.0,990.1" fill="none" stroke="#2020e0" stroke-width="1.6" stroke-linejoin="miter" stroke-linecap="butt"/>
<polyline points="1564.3,1040.9 1835.0,1040.9" fill="none" stroke="#6a6a6a" stroke-width="10" stroke-linejoin="miter" stroke-linecap="butt"/>
<polyline points="1564.3,1040.9 1835.0,1040.9" fill="none" stroke="#ffffff" stroke-width="6.6" stroke-linejoin="miter" stroke-linecap="butt"/>
<path d="M1638.6,985 C1638.6,1008 1644.2,1018 1644.2,1043 M1644.2,985 C1644.2,1008 1638.6,1018 1638.6,1043" fill="none" stroke="#333" stroke-width="1.4"/>
<circle cx="1641.4" cy="983.5" r="2.8" fill="#fff" stroke="#333" stroke-width="1.4"/>
<circle cx="1641.4" cy="1045.5" r="2.8" fill="#fff" stroke="#333" stroke-width="1.4"/>
<text x="1553.7" y="1010.9" font-size="17.8" fill="#2626cf">10</text>
<text x="1556.0" y="1061.2" font-size="17.8" fill="#2626cf">9</text>
<text x="1681.0" y="982.5" font-size="17.8" fill="#1e1e1e" textLength="58.7" lengthAdjust="spacingAndGlyphs">VDB04</text>
<text x="1751.0" y="982.5" font-size="17.8" fill="#1e1e1e" textLength="62.4" lengthAdjust="spacingAndGlyphs">WH-BU</text>
<text x="1681.0" y="1032.8" font-size="17.8" fill="#1e1e1e" textLength="58.7" lengthAdjust="spacingAndGlyphs">VDB05</text>
<text x="1752.0" y="1032.8" font-size="17.8" fill="#1e1e1e">WH</text>
<polyline points="1835.0,990.4 1848.5,990.4" fill="none" stroke="#333" stroke-width="2" stroke-linejoin="miter" stroke-linecap="butt"/>
<polyline points="1835.0,1040.9 1848.5,1040.9" fill="none" stroke="#333" stroke-width="2" stroke-linejoin="miter" stroke-linecap="butt"/>
<path d="M1848.5,975.6 H1894 L1907,990.4 L1894,1005.2 H1848.5 Z" fill="#f0f0f0" stroke="#333" stroke-width="2"/>
<path d="M1848.5,1026.3 H1894 L1907,1040.9 L1894,1055.5 H1848.5 Z" fill="#f0f0f0" stroke="#333" stroke-width="2"/>
<path d="M1922.5,970.5 C1928.5,982 1927.5,1000 1925.5,1008 L1929,1015.5 L1925.5,1023 C1927.5,1031 1928.5,1049 1922.5,1061" fill="none" stroke="#222" stroke-width="2"/>
<text x="1945.7" y="990.6" font-size="17.8" fill="#1e1e1e" textLength="75.9" lengthAdjust="spacingAndGlyphs">MODULE</text>
<text x="1945.7" y="1007.6" font-size="17.8" fill="#1e1e1e" textLength="168.3" lengthAdjust="spacingAndGlyphs">COMMUNICATIONS</text>
<text x="1945.7" y="1025.5" font-size="17.8" fill="#1e1e1e" textLength="90.5" lengthAdjust="spacingAndGlyphs">NETWORK</text>
<text x="1945.7" y="1042.5" font-size="17.8" fill="#2626cf" textLength="41.3" lengthAdjust="spacingAndGlyphs">14-3</text>
<text x="1945.7" y="1060.4" font-size="17.8" fill="#2626cf" textLength="41.8" lengthAdjust="spacingAndGlyphs">14-5</text>
<text x="1989.5" y="1084.7" font-size="17.8" fill="#1e1e1e" textLength="264.5" lengthAdjust="spacingAndGlyphs">with electronically locking hubs</text>
<polyline points="1537.4,1093.3 2208.0,1093.3" fill="none" stroke="#222" stroke-width="2" stroke-dasharray="7 5"/>
<polyline points="1537.4,1401.1 2208.0,1401.1" fill="none" stroke="#222" stroke-width="2" stroke-dasharray="7 5"/>
<polyline points="1537.4,1093.3 1537.4,1401.1" fill="none" stroke="#666" stroke-width="2.8" stroke-dasharray="7 5"/>
<polyline points="2208.0,1093.3 2208.0,1401.1" fill="none" stroke="#666" stroke-width="2.8" stroke-dasharray="7 5"/>
<text x="1382.7" y="1147.1" font-size="17.8" fill="#1e1e1e" textLength="146.0" lengthAdjust="spacingAndGlyphs">DIFF LOCK CTRL</text>
<polyline points="1520.0,1141.3 1564.3,1141.3" fill="none" stroke="#222" stroke-width="2" stroke-linejoin="miter" stroke-linecap="butt"/>
<g transform="translate(1554.6,1141.3) rotate(90)"><path d="M-9,9.8 Q-4.5,4 -1.2,3.2 M9,9.8 Q4.5,4 1.2,3.2" fill="none" stroke="#111" stroke-width="2.7"/><path d="M-1.9,9.7 V1.5 L0,0 L1.9,1.5 V9.7 Z" fill="#0d0d2a"/></g>
<polyline points="1564.3,1141.3 1758.3,1141.3" fill="none" stroke="#6a3a3a" stroke-width="9.6" stroke-linejoin="miter" stroke-linecap="butt"/>
<polyline points="1564.3,1141.3 1758.3,1141.3" fill="none" stroke="#952535" stroke-width="7.6" stroke-linejoin="miter" stroke-linecap="butt"/>
<polyline points="1564.3,1141.3 1758.3,1141.3" fill="none" stroke="#e070b8" stroke-width="2.2" stroke-linejoin="miter" stroke-linecap="butt"/>
<text x="1549.3" y="1131.6" font-size="17.8" fill="#2626cf" textLength="68.7" lengthAdjust="spacingAndGlyphs">C2371B</text>
<text x="1618.1" y="1131.6" font-size="17.8" fill="#1e1e1e" textLength="56.4" lengthAdjust="spacingAndGlyphs">CCF31</text>
<text x="1688.0" y="1131.6" font-size="17.8" fill="#1e1e1e" textLength="55.4" lengthAdjust="spacingAndGlyphs">BN-VT</text>
<text x="1553.5" y="1164.3" font-size="17.8" fill="#2626cf">9</text>
<polyline points="1758.3,1141.3 1788.0,1141.3" fill="none" stroke="#222" stroke-width="2" stroke-linejoin="miter" stroke-linecap="butt"/>
<g transform="translate(1768.6,1141.3) rotate(270)"><path d="M-9,9.8 Q-4.5,4 -1.2,3.2 M9,9.8 Q4.5,4 1.2,3.2" fill="none" stroke="#111" stroke-width="2.7"/><path d="M-1.9,9.7 V1.5 L0,0 L1.9,1.5 V9.7 Z" fill="#0d0d2a"/></g>
<polyline points="1783.4,1146.0 1783.4,1352.0" fill="none" stroke="#666" stroke-width="2.4" stroke-dasharray="7 5"/>
<text x="1751.6" y="1124.6" font-size="17.8" fill="#2626cf" textLength="55.7" lengthAdjust="spacingAndGlyphs">C1581</text>
<text x="1754.9" y="1164.6" font-size="17.8" fill="#2626cf">19</text>
<polyline points="1788.0,1141.3 1952.0,1141.3 1952.0,1154.3" fill="none" stroke="#6a3a3a" stroke-width="9.6" stroke-linejoin="miter" stroke-linecap="butt"/>
<polyline points="1788.0,1141.3 1952.0,1141.3 1952.0,1154.3" fill="none" stroke="#952535" stroke-width="7.6" stroke-linejoin="miter" stroke-linecap="butt"/>
<polyline points="1788.0,1141.3 1952.0,1141.3 1952.0,1154.3" fill="none" stroke="#e070b8" stroke-width="2.2" stroke-linejoin="miter" stroke-linecap="butt"/>
<text x="1812.1" y="1132.6" font-size="17.8" fill="#1e1e1e" textLength="56.4" lengthAdjust="spacingAndGlyphs">CCF31</text>
<text x="1881.8" y="1132.6" font-size="17.8" fill="#1e1e1e" textLength="55.4" lengthAdjust="spacingAndGlyphs">BN-VT</text>
<polyline points="1952.0,1154.0 1952.0,1230.8" fill="none" stroke="#222" stroke-width="2" stroke-linejoin="miter" stroke-linecap="butt"/>
<g transform="translate(1952.0,1164.6) rotate(0)"><path d="M-9,9.8 Q-4.5,4 -1.2,3.2 M9,9.8 Q4.5,4 1.2,3.2" fill="none" stroke="#111" stroke-width="2.7"/><path d="M-1.9,9.7 V1.5 L0,0 L1.9,1.5 V9.7 Z" fill="#0d0d2a"/></g>
<text x="1928.5" y="1166.4" font-size="17.8" fill="#2626cf">1</text>
<text x="1957.2" y="1166.4" font-size="17.8" fill="#2626cf" textLength="56.9" lengthAdjust="spacingAndGlyphs">C4359</text>
<rect x="1907.5" y="1183.3" width="98.7" height="111.1" fill="#f2f2f2" stroke="#5050e4" stroke-width="2.2"/>
<rect x="1919.4" y="1193.1" width="76.5" height="88.5" fill="none" stroke="#444" stroke-width="2.2"/>
<polyline points="1952.0,1183.0 1952.0,1230.8" fill="none" stroke="#222" stroke-width="2" stroke-linejoin="miter" stroke-linecap="butt"/>
<path d="M1952,1230.8 a4.57,4.57 0 0 1 0,9.13 a4.57,4.57 0 0 1 0,9.13 a4.57,4.57 0 0 1 0,9.13" fill="none" stroke="#222" stroke-width="1.8"/>
<path d="M1962.8,1232.8 V1258.2 M1968,1232.8 V1258.2" fill="none" stroke="#333" stroke-width="1.5"/>
<polyline points="1952.0,1258.2 1952.0,1323.4" fill="none" stroke="#222" stroke-width="2" stroke-linejoin="miter" stroke-linecap="butt"/>
<g transform="translate(1952.0,1310.8) rotate(180)"><path d="M-9,9.8 Q-4.5,4 -1.2,3.2 M9,9.8 Q4.5,4 1.2,3.2" fill="none" stroke="#111" stroke-width="2.7"/><path d="M-1.9,9.7 V1.5 L0,0 L1.9,1.5 V9.7 Z" fill="#0d0d2a"/></g>
<text x="1930.8" y="1323.4" font-size="17.8" fill="#2626cf">2</text>
<text x="1957.2" y="1323.4" font-size="17.8" fill="#2626cf" textLength="56.9" lengthAdjust="spacingAndGlyphs">C4359</text>
<text x="2018.3" y="1197.7" font-size="17.8" fill="#1e1e1e" textLength="200.3" lengthAdjust="spacingAndGlyphs">ELECTRONIC LOCKING</text>
<text x="2018.3" y="1214.8" font-size="17.8" fill="#1e1e1e" textLength="183.2" lengthAdjust="spacingAndGlyphs">DIFFERENTIAL (ELD)</text>
<text x="2018.3" y="1232.0" font-size="17.8" fill="#1e1e1e" textLength="100.9" lengthAdjust="spacingAndGlyphs">FIELD COIL</text>
<text x="2018.3" y="1250.9" font-size="17.8" fill="#2626cf" textLength="63.7" lengthAdjust="spacingAndGlyphs">151-36</text>
<polyline points="1952.0,1323.4 1952.0,1354.5 1788.0,1354.5" fill="none" stroke="#0e0e0e" stroke-width="9" stroke-linejoin="miter" stroke-linecap="butt"/>
<polyline points="1952.0,1323.4 1952.0,1354.5 1788.0,1354.5" fill="none" stroke="#6a6a6a" stroke-width="1.8" stroke-linejoin="miter" stroke-linecap="butt"/>
<polyline points="1758.3,1354.5 1788.0,1354.5" fill="none" stroke="#222" stroke-width="2" stroke-linejoin="miter" stroke-linecap="butt"/>
<g transform="translate(1768.6,1354.5) rotate(270)"><path d="M-9,9.8 Q-4.5,4 -1.2,3.2 M9,9.8 Q4.5,4 1.2,3.2" fill="none" stroke="#111" stroke-width="2.7"/><path d="M-1.9,9.7 V1.5 L0,0 L1.9,1.5 V9.7 Z" fill="#0d0d2a"/></g>
<text x="1754.9" y="1378.2" font-size="17.8" fill="#2626cf">20</text>
<text x="1812.1" y="1345.1" font-size="17.8" fill="#1e1e1e" textLength="56.4" lengthAdjust="spacingAndGlyphs">GD123</text>
<text x="1881.8" y="1345.1" font-size="17.8" fill="#1e1e1e" textLength="55.4" lengthAdjust="spacingAndGlyphs">BK-GY</text>
<text x="1618.1" y="1345.0" font-size="17.8" fill="#1e1e1e" textLength="56.4" lengthAdjust="spacingAndGlyphs">GD123</text>
<text x="1688.0" y="1345.0" font-size="17.8" fill="#1e1e1e" textLength="55.4" lengthAdjust="spacingAndGlyphs">BK-GY</text>
<polyline points="1058.5,1234.8 1058.5,1279.3" fill="none" stroke="#555" stroke-width="2" stroke-linejoin="miter" stroke-linecap="butt"/>
<g transform="translate(1058.5,1267.9) rotate(180)"><path d="M-9,9.8 Q-4.5,4 -1.2,3.2 M9,9.8 Q4.5,4 1.2,3.2" fill="none" stroke="#111" stroke-width="2.7"/><path d="M-1.9,9.7 V1.5 L0,0 L1.9,1.5 V9.7 Z" fill="#0d0d2a"/></g>
<polyline points="1204.7,1234.8 1204.7,1279.3" fill="none" stroke="#555" stroke-width="2" stroke-linejoin="miter" stroke-linecap="butt"/>
<g transform="translate(1204.7,1267.9) rotate(180)"><path d="M-9,9.8 Q-4.5,4 -1.2,3.2 M9,9.8 Q4.5,4 1.2,3.2" fill="none" stroke="#111" stroke-width="2.7"/><path d="M-1.9,9.7 V1.5 L0,0 L1.9,1.5 V9.7 Z" fill="#0d0d2a"/></g>
<polyline points="1058.5,1254.2 1204.7,1254.2" fill="none" stroke="#777" stroke-width="2.6" stroke-dasharray="7 5"/>
<text x="1036.8" y="1281.6" font-size="17.8" fill="#2626cf">3</text>
<text x="1177.3" y="1281.6" font-size="17.8" fill="#2626cf">10</text>
<text x="1216.3" y="1281.6" font-size="17.8" fill="#2626cf" textLength="69.4" lengthAdjust="spacingAndGlyphs">C2371B</text>
<polyline points="1058.5,1279.3 1058.5,1354.5 1156.8,1354.5 1204.7,1404.0" fill="none" stroke="#0e0e0e" stroke-width="9" stroke-linejoin="miter" stroke-linecap="butt"/>
<polyline points="1058.5,1279.3 1058.5,1354.5 1156.8,1354.5 1204.7,1404.0" fill="none" stroke="#6a6a6a" stroke-width="1.8" stroke-linejoin="miter" stroke-linecap="butt"/>
<polyline points="1204.7,1279.3 1204.7,1406.0" fill="none" stroke="#0e0e0e" stroke-width="9" stroke-linejoin="miter" stroke-linecap="butt"/>
<polyline points="1204.7,1279.3 1204.7,1406.0" fill="none" stroke="#6a6a6a" stroke-width="1.8" stroke-linejoin="miter" stroke-linecap="butt"/>
<polyline points="1758.3,1354.5 1255.0,1354.5 1204.7,1404.0" fill="none" stroke="#0e0e0e" stroke-width="9" stroke-linejoin="miter" stroke-linecap="butt"/>
<polyline points="1758.3,1354.5 1255.0,1354.5 1204.7,1404.0" fill="none" stroke="#6a6a6a" stroke-width="1.8" stroke-linejoin="miter" stroke-linecap="butt"/>
<polyline points="1204.7,1406.0 1204.7,1422.0" fill="none" stroke="#555" stroke-width="1.8" stroke-linejoin="miter" stroke-linecap="butt"/>
<path d="M1194.7,1422 H1214.7 M1198.7,1428 H1210.7 M1202.7,1433 H1206.7" fill="none" stroke="#444" stroke-width="1.8"/>
<text x="1231.1" y="1410.7" font-size="17.8" fill="#2626cf" textLength="45.5" lengthAdjust="spacingAndGlyphs">G101</text>
<text x="1231.1" y="1427.8" font-size="17.8" fill="#2626cf" textLength="41.0" lengthAdjust="spacingAndGlyphs">10-2</text>
<text transform="translate(1051.2,1344.3) rotate(-90)" font-size="17.8" fill="#1e1e1e" textLength="59.1" lengthAdjust="spacingAndGlyphs">GD123</text>
<text transform="translate(1082.5,1344.3) rotate(-90)" font-size="17.8" fill="#1e1e1e" textLength="55.7" lengthAdjust="spacingAndGlyphs">BK-GY</text>
<text transform="translate(1196.7,1344.3) rotate(-90)" font-size="17.8" fill="#1e1e1e" textLength="59.1" lengthAdjust="spacingAndGlyphs">GD123</text>
<text transform="translate(1228.7,1344.3) rotate(-90)" font-size="17.8" fill="#1e1e1e" textLength="55.7" lengthAdjust="spacingAndGlyphs">BK-GY</text>
</svg></body></html>
